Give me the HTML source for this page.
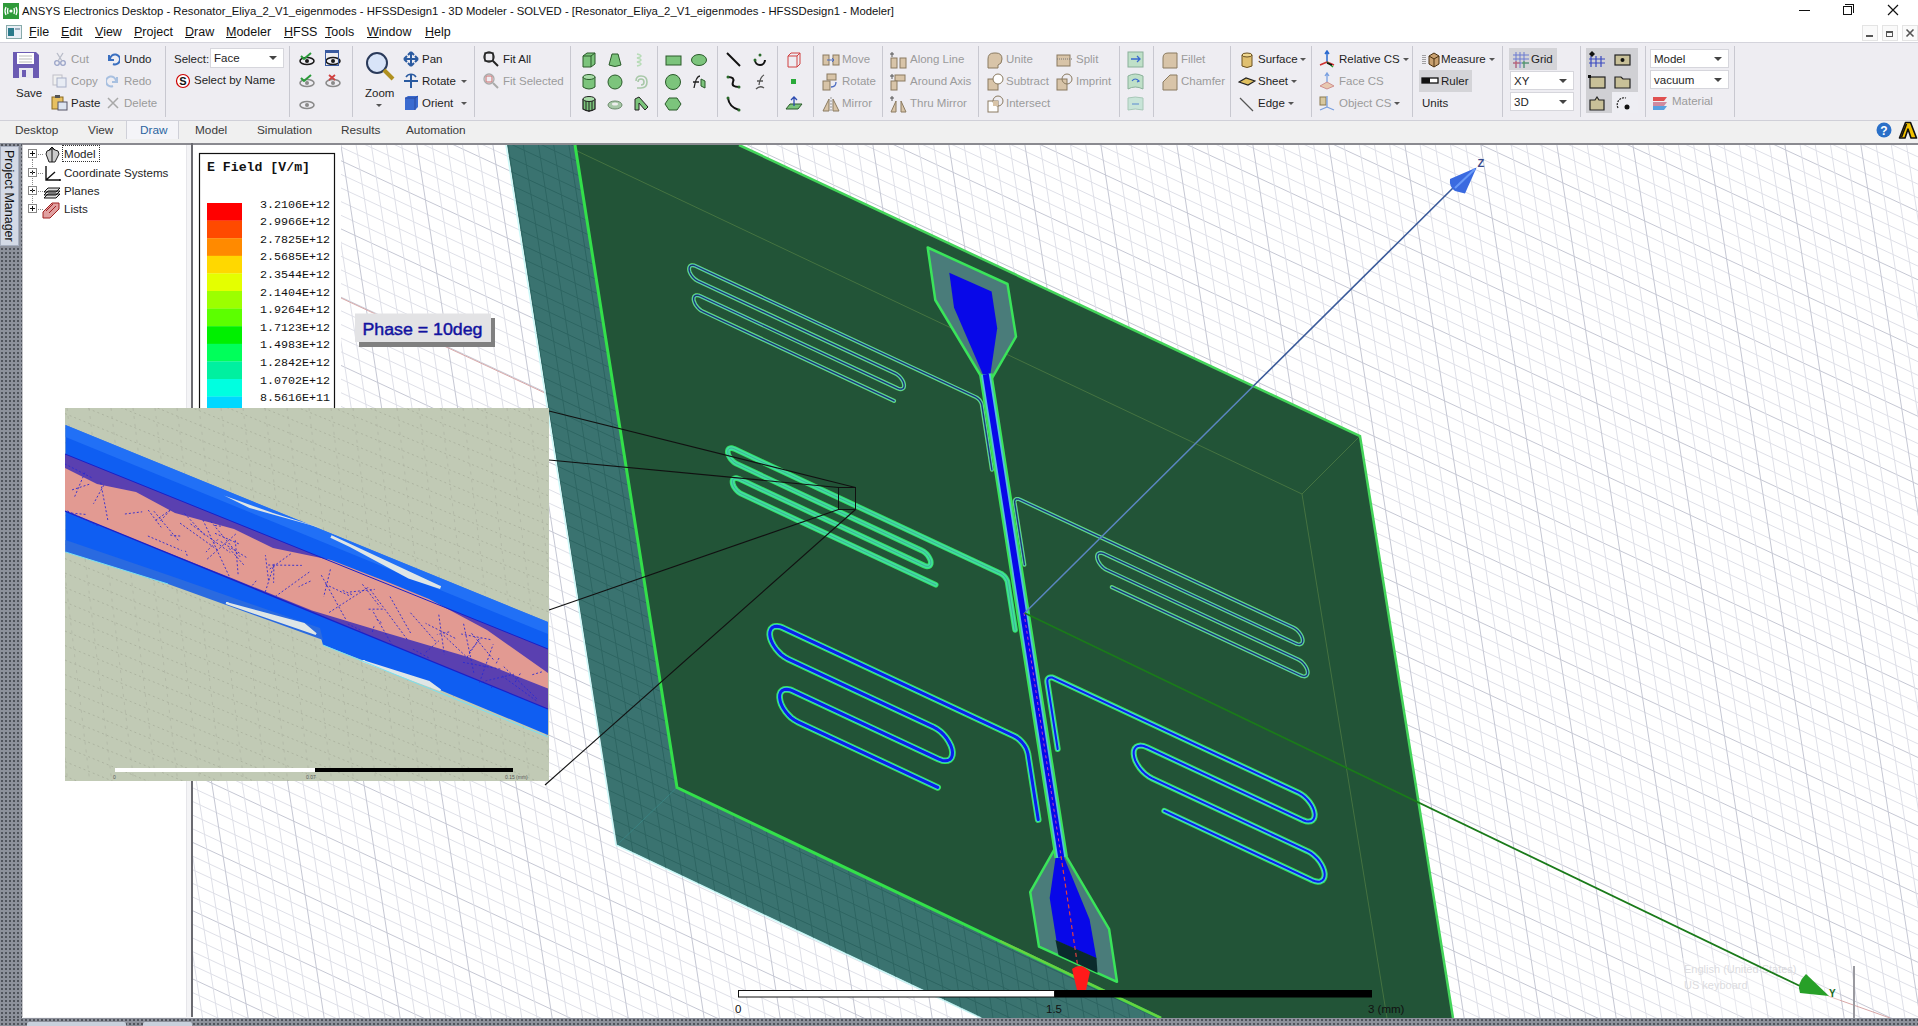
<!DOCTYPE html><html><head><meta charset="utf-8"><style>
*{box-sizing:border-box}
body{margin:0;width:1918px;height:1026px;position:relative;overflow:hidden;background:#fff;font-family:"Liberation Sans",sans-serif;color:#1e1e1e}
.a{position:absolute;white-space:nowrap}
.t{position:absolute;white-space:nowrap;font-size:12px;line-height:14px}
.g{color:#9b9b9b}
.sep{position:absolute;width:1px;background:#c8c8d0}
.dd{position:absolute;background:#fff;border:1px solid #d6d6dc;font-size:11.5px;line-height:18px;padding-left:3px}
.dd:after{content:"";position:absolute;right:6px;top:7px;border-left:4px solid transparent;border-right:4px solid transparent;border-top:4px solid #444}
.arr{position:absolute;width:0;height:0;border-left:3px solid transparent;border-right:3px solid transparent;border-top:3px solid #555}
</style></head><body>
<div class="a" style="left:0;top:0;width:1918px;height:22px;background:#fff"></div>
<svg class="a" style="left:3px;top:3px" width="16" height="16"><rect x="0" y="0" width="16" height="16" fill="#2f9a3a"/><path d="M3 4 Q1 8 3 12 M5 5 Q4 8 5 11 M13 4 Q15 8 13 12 M11 5 Q12 8 11 11" stroke="#fff" stroke-width="1.3" fill="none"/><circle cx="8" cy="8" r="1.6" fill="#fff"/></svg>
<div class="a" style="left:22px;top:4px;font-size:11.3px;line-height:15px;color:#111">ANSYS Electronics Desktop - Resonator_Eliya_2_V1_eigenmodes - HFSSDesign1 - 3D Modeler - SOLVED - [Resonator_Eliya_2_V1_eigenmodes - HFSSDesign1 - Modeler]</div>
<div class="a" style="left:1799px;top:10px;width:11px;height:1px;background:#111"></div>
<div class="a" style="left:1843px;top:6px;width:9px;height:9px;border:1px solid #111;background:#fff"></div><div class="a" style="left:1845px;top:4px;width:9px;height:9px;border-top:1px solid #111;border-right:1px solid #111"></div>
<svg class="a" style="left:1887px;top:4px" width="12" height="12"><path d="M1 1 L11 11 M11 1 L1 11" stroke="#111" stroke-width="1.2"/></svg>
<svg class="a" style="left:6px;top:25px" width="16" height="14"><rect x="0.5" y="0.5" width="15" height="13" fill="#e8eef5" stroke="#8aa"/><rect x="2" y="3" width="6" height="8" fill="#2a7a8a"/><rect x="9" y="3" width="5" height="2" fill="#9ab"/></svg>
<div class="a" style="left:29px;top:25px;font-size:12.5px;line-height:15px;color:#111"><u>F</u>ile</div>
<div class="a" style="left:61px;top:25px;font-size:12.5px;line-height:15px;color:#111"><u>E</u>dit</div>
<div class="a" style="left:95px;top:25px;font-size:12.5px;line-height:15px;color:#111"><u>V</u>iew</div>
<div class="a" style="left:134px;top:25px;font-size:12.5px;line-height:15px;color:#111"><u>P</u>roject</div>
<div class="a" style="left:185px;top:25px;font-size:12.5px;line-height:15px;color:#111"><u>D</u>raw</div>
<div class="a" style="left:226px;top:25px;font-size:12.5px;line-height:15px;color:#111"><u>M</u>odeler</div>
<div class="a" style="left:284px;top:25px;font-size:12.5px;line-height:15px;color:#111"><u>H</u>FSS</div>
<div class="a" style="left:325px;top:25px;font-size:12.5px;line-height:15px;color:#111"><u>T</u>ools</div>
<div class="a" style="left:367px;top:25px;font-size:12.5px;line-height:15px;color:#111"><u>W</u>indow</div>
<div class="a" style="left:425px;top:25px;font-size:12.5px;line-height:15px;color:#111"><u>H</u>elp</div>
<div class="a" style="left:1862px;top:25px;width:16px;height:16px;background:#fafafa;border:1px solid #e4e4e4"></div>
<div class="a" style="left:1882px;top:25px;width:16px;height:16px;background:#fafafa;border:1px solid #e4e4e4"></div>
<div class="a" style="left:1902px;top:25px;width:16px;height:16px;background:#fafafa;border:1px solid #e4e4e4"></div>
<div class="a" style="left:1866px;top:35px;width:7px;height:2px;background:#555"></div>
<div class="a" style="left:1886px;top:31px;width:7px;height:6px;border:1px solid #555;border-top-width:2px"></div>
<svg class="a" style="left:1905px;top:28px" width="10" height="10"><path d="M1.5 1.5 L8.5 8.5 M8.5 1.5 L1.5 8.5" stroke="#555" stroke-width="1.6"/></svg>
<div class="a" style="left:0;top:42px;width:1918px;height:79px;background:#eeedf2;border-top:1px solid #d4d4dc;border-bottom:1px solid #d0d0d8"></div>
<div class="sep" style="left:165px;top:46px;height:71px"></div>
<div class="sep" style="left:289px;top:46px;height:71px"></div>
<div class="sep" style="left:352px;top:46px;height:71px"></div>
<div class="sep" style="left:474px;top:46px;height:71px"></div>
<div class="sep" style="left:570px;top:46px;height:71px"></div>
<div class="sep" style="left:657px;top:46px;height:71px"></div>
<div class="sep" style="left:717px;top:46px;height:71px"></div>
<div class="sep" style="left:777px;top:46px;height:71px"></div>
<div class="sep" style="left:813px;top:46px;height:71px"></div>
<div class="sep" style="left:882px;top:46px;height:71px"></div>
<div class="sep" style="left:978px;top:46px;height:71px"></div>
<div class="sep" style="left:1119px;top:46px;height:71px"></div>
<div class="sep" style="left:1153px;top:46px;height:71px"></div>
<div class="sep" style="left:1230px;top:46px;height:71px"></div>
<div class="sep" style="left:1311px;top:46px;height:71px"></div>
<div class="sep" style="left:1412px;top:46px;height:71px"></div>
<div class="sep" style="left:1502px;top:46px;height:71px"></div>
<div class="sep" style="left:1580px;top:46px;height:71px"></div>
<div class="sep" style="left:1645px;top:46px;height:71px"></div>
<div class="sep" style="left:1734px;top:46px;height:71px"></div>
<svg class="a" style="left:12px;top:51px" width="28" height="28"><path d="M1 1 H24 L27 4 V27 H1 Z" fill="#6b5bb3"/><rect x="5" y="2" width="17" height="11" fill="#fff"/><path d="M7 5 H20 M7 8 H20 M7 11 H20" stroke="#bbb"/><rect x="7" y="17" width="14" height="10" fill="#e8e8f0"/><rect x="10" y="19" width="4" height="7" fill="#6b5bb3"/></svg>
<div class="t" style="left:16px;top:86px;font-size:11.5px">Save</div>
<svg class="a" style="left:53px;top:52px" width="14" height="14"><circle cx="4" cy="11" r="2.3" fill="none" stroke="#9aa4c8" stroke-width="1.3"/><circle cx="10" cy="11" r="2.3" fill="none" stroke="#9aa4c8" stroke-width="1.3"/><path d="M5 9 L10 1 M9 9 L4 1" stroke="#b8bcc8" stroke-width="1.3"/></svg>
<div class="t g" style="left:71px;top:52px;font-size:11.5px">Cut</div>
<svg class="a" style="left:52px;top:74px" width="16" height="14"><rect x="1" y="1" width="9" height="10" fill="#f0f0f0" stroke="#c0c0c8"/><rect x="5" y="4" width="9" height="9" fill="#e8ecf4" stroke="#a8b0c8"/></svg>
<div class="t g" style="left:71px;top:74px;font-size:11.5px">Copy</div>
<svg class="a" style="left:51px;top:95px" width="17" height="16"><rect x="1" y="2" width="11" height="12" fill="#e8c060" stroke="#8a6a20"/><rect x="4" y="0" width="5" height="3" fill="#555"/><rect x="7" y="7" width="9" height="8" fill="#dde4f0" stroke="#556"/></svg>
<div class="t" style="left:71px;top:96px;font-size:11.5px">Paste</div>
<svg class="a" style="left:106px;top:52px" width="14" height="14"><path d="M3 3 V8 H8" fill="none" stroke="#3a6fc0" stroke-width="2"/><path d="M4 7 A5 5 0 1 1 7 12" fill="none" stroke="#3a6fc0" stroke-width="2"/></svg>
<div class="t" style="left:124px;top:52px;font-size:11.5px">Undo</div>
<svg class="a" style="left:106px;top:74px" width="14" height="14"><path d="M11 3 V8 H6" fill="none" stroke="#a8c0e0" stroke-width="2"/><path d="M10 7 A5 5 0 1 0 7 12" fill="none" stroke="#a8c0e0" stroke-width="2"/></svg>
<div class="t g" style="left:124px;top:74px;font-size:11.5px">Redo</div>
<svg class="a" style="left:106px;top:96px" width="14" height="14"><path d="M2 2 L12 12 M12 2 L2 12" stroke="#a8a8a8" stroke-width="1.5"/></svg>
<div class="t g" style="left:124px;top:96px;font-size:11.5px">Delete</div>
<div class="t" style="left:174px;top:52px;font-size:11.5px">Select:</div>
<div class="dd" style="left:210px;top:48px;width:74px;height:20px">Face</div>
<svg class="a" style="left:175px;top:73px" width="16" height="16"><circle cx="8" cy="8" r="6.5" fill="#fff" stroke="#c00" stroke-width="1.2"/><text x="8" y="12" font-size="11" text-anchor="middle" font-family="Liberation Sans" font-weight="bold" fill="#111">S</text></svg>
<div class="t" style="left:194px;top:73px;font-size:11.5px">Select by Name</div>
<svg class="a" style="left:298px;top:52px" width="18" height="14"><ellipse cx="9" cy="9" rx="7" ry="3.5" fill="none" stroke="#1a1a1a" stroke-width="1.6"/><circle cx="9" cy="9" r="2" fill="#1a1a1a"/><path d="M3 4 L6 7 L13 1" stroke="#2a9a3a" stroke-width="2" fill="none"/></svg>
<svg class="a" style="left:324px;top:52px" width="18" height="14"><ellipse cx="9" cy="9" rx="7" ry="3.5" fill="none" stroke="#1a1a1a" stroke-width="1.6"/><circle cx="9" cy="9" r="2" fill="#1a1a1a"/></svg>
<div class="a" style="left:325px;top:50px;width:14px;height:16px;border:1px solid #3a5aa0;border-top-width:3px"></div>
<svg class="a" style="left:298px;top:74px" width="18" height="14"><ellipse cx="9" cy="9" rx="7" ry="3.5" fill="none" stroke="#8a8a8a" stroke-width="1.6"/><circle cx="9" cy="9" r="2" fill="#8a8a8a"/><path d="M3 4 L6 7 L13 1" stroke="#2a9a3a" stroke-width="2" fill="none"/></svg>
<svg class="a" style="left:324px;top:74px" width="18" height="14"><ellipse cx="9" cy="9" rx="7" ry="3.5" fill="none" stroke="#8a8a8a" stroke-width="1.6"/><circle cx="9" cy="9" r="2" fill="#8a8a8a"/><path d="M5 1 L11 6 M11 1 L5 6" stroke="#d04040" stroke-width="1.8"/></svg>
<svg class="a" style="left:298px;top:96px" width="18" height="14"><ellipse cx="9" cy="9" rx="7" ry="3.5" fill="none" stroke="#8a8a8a" stroke-width="1.6"/><circle cx="9" cy="9" r="2" fill="#8a8a8a"/></svg>
<svg class="a" style="left:364px;top:51px" width="32" height="30"><circle cx="13" cy="12" r="10" fill="#d8e4f8" stroke="#2a3a5a" stroke-width="2"/><path d="M20 19 L29 28" stroke="#b09020" stroke-width="4"/></svg>
<div class="t" style="left:365px;top:86px;font-size:11.5px">Zoom</div>
<div class="arr" style="left:376px;top:104px"></div>
<svg class="a" style="left:403px;top:51px" width="16" height="16"><path d="M8 1 V15 M1 8 H15 M8 1 L5 4 M8 1 L11 4 M8 15 L5 12 M8 15 L11 12 M1 8 L4 5 M1 8 L4 11 M15 8 L12 5 M15 8 L12 11" stroke="#2a5aa0" stroke-width="2" fill="none"/></svg>
<div class="t" style="left:422px;top:52px;font-size:11.5px">Pan</div>
<svg class="a" style="left:403px;top:73px" width="16" height="16"><path d="M8 1 V15 M1 8 H15" stroke="#2a5aa0" stroke-width="2"/><path d="M3 4 A6 6 0 0 1 13 4" stroke="#2a5aa0" stroke-width="1.5" fill="none"/></svg>
<div class="t" style="left:422px;top:74px;font-size:11.5px">Rotate</div>
<div class="arr" style="left:461px;top:80px"></div>
<svg class="a" style="left:404px;top:95px" width="15" height="16"><path d="M1 3 L4 1 H14 V12 L11 15 H1 Z" fill="#3a6ad0"/><path d="M1 3 H11 V15 M11 3 L14 1" stroke="#2a4aa0" fill="none"/></svg>
<div class="t" style="left:422px;top:96px;font-size:11.5px">Orient</div>
<div class="arr" style="left:461px;top:102px"></div>
<svg class="a" style="left:483px;top:51px" width="16" height="16"><rect x="2" y="2" width="8" height="8" fill="none" stroke="#222" stroke-width="1.3"/><circle cx="6" cy="6" r="5" fill="none" stroke="#222" stroke-width="1.3"/><path d="M10 10 L15 15" stroke="#222" stroke-width="2"/></svg>
<div class="t" style="left:503px;top:52px;font-size:11.5px">Fit All</div>
<svg class="a" style="left:483px;top:73px" width="16" height="16"><rect x="3" y="3" width="6" height="6" fill="none" stroke="#d08080" stroke-width="1.2"/><circle cx="6" cy="6" r="5" fill="none" stroke="#aaa" stroke-width="1.3"/><path d="M10 10 L15 15" stroke="#aaa" stroke-width="2"/></svg>
<div class="t g" style="left:503px;top:74px;font-size:11.5px">Fit Selected</div>
<svg class="a" style="left:580px;top:51px" width="18" height="18"><path d="M3 5 L7 2 H15 V13 L11 16 H3 Z" fill="#7cc47c" stroke="#2a5a2a"/><path d="M3 5 H11 V16 M11 5 L15 2" stroke="#2a5a2a" fill="none"/></svg>
<svg class="a" style="left:606px;top:51px" width="18" height="18"><path d="M6 3 H12 L15 14 Q9 17 3 14 Z" fill="#7cc47c" stroke="#2a5a2a"/></svg>
<svg class="a" style="left:632px;top:51px" width="18" height="18"><path d="M5 3 Q13 5 5 7 Q13 9 5 11 Q13 13 5 15" stroke="#b8dcb8" stroke-width="1.5" fill="none"/></svg>
<svg class="a" style="left:580px;top:73px" width="18" height="18"><path d="M3 4 V14 Q9 18 15 14 V4" fill="#7cc47c" stroke="#2a5a2a"/><ellipse cx="9" cy="4" rx="6" ry="2.5" fill="#a8dca8" stroke="#2a5a2a"/></svg>
<svg class="a" style="left:606px;top:73px" width="18" height="18"><circle cx="9" cy="9" r="7" fill="#7cc47c" stroke="#2a5a2a"/></svg>
<svg class="a" style="left:632px;top:73px" width="18" height="18"><path d="M4 8 Q4 3 9 3 Q15 3 15 9 Q15 15 9 15 L5 15 M6 9 Q6 6 9 6 Q12 6 12 9 Q12 12 9 12" stroke="#a8c8a8" stroke-width="1.6" fill="none"/></svg>
<svg class="a" style="left:580px;top:95px" width="18" height="18"><path d="M3 4 V14 Q9 18 15 14 V4" fill="#7cc47c" stroke="#222" stroke-width="1.3"/><ellipse cx="9" cy="4" rx="6" ry="2.5" fill="#a8dca8" stroke="#222"/><path d="M6 6 V16 M9 7 V17 M12 6 V16" stroke="#222"/></svg>
<svg class="a" style="left:606px;top:95px" width="18" height="18"><ellipse cx="9" cy="10" rx="7" ry="4" fill="#a8c8a8" stroke="#6a8a6a"/><ellipse cx="9" cy="9" rx="3" ry="1.5" fill="#eee"/></svg>
<svg class="a" style="left:632px;top:95px" width="18" height="18"><path d="M3 15 V4 L7 2 L16 12 L13 15 L7 8 V15 Z" fill="#7cc47c" stroke="#222"/></svg>
<svg class="a" style="left:664px;top:51px" width="18" height="18"><rect x="2" y="5" width="15" height="9" fill="#7cc47c" stroke="#2a5a2a"/></svg>
<svg class="a" style="left:690px;top:51px" width="18" height="18"><ellipse cx="9" cy="9" rx="7.5" ry="5.5" fill="#7cc47c" stroke="#2a5a2a"/></svg>
<svg class="a" style="left:664px;top:73px" width="18" height="18"><circle cx="9" cy="9" r="7.5" fill="#7cc47c" stroke="#2a5a2a"/></svg>
<svg class="a" style="left:690px;top:73px" width="18" height="18"><path d="M4 15 Q6 3 10 3 M3 9 H9" stroke="#222" stroke-width="1.3" fill="none"/><path d="M11 6 L15 8 V15 L11 13 Z" fill="#7cc47c" stroke="#2a5a2a"/></svg>
<svg class="a" style="left:664px;top:95px" width="18" height="18"><path d="M5 3 H13 L17 9 L13 15 H5 L1 9 Z" fill="#7cc47c" stroke="#2a5a2a"/></svg>
<svg class="a" style="left:725px;top:51px" width="18" height="18"><path d="M2 2 L15 15" stroke="#111" stroke-width="2"/></svg>
<svg class="a" style="left:751px;top:51px" width="18" height="18"><path d="M4 9 A5 5 0 1 0 14 9" stroke="#111" stroke-width="2" fill="none"/><circle cx="4" cy="9" r="1.5" fill="#2a6a2a"/><circle cx="9" cy="4" r="1.5" fill="#2a6a2a"/></svg>
<svg class="a" style="left:725px;top:73px" width="18" height="18"><path d="M3 4 Q10 4 8 9 Q6 14 14 14" stroke="#111" stroke-width="2" fill="none"/><circle cx="3" cy="4" r="1.5" fill="#2a6a2a"/><circle cx="14" cy="14" r="1.5" fill="#2a6a2a"/></svg>
<svg class="a" style="left:751px;top:73px" width="18" height="18"><path d="M5 16 Q9 12 13 15 M8 12 Q9 4 13 2 M6 8 H12" stroke="#555" stroke-width="1.3" fill="none"/></svg>
<svg class="a" style="left:725px;top:95px" width="18" height="18"><path d="M3 3 Q4 12 14 15" stroke="#111" stroke-width="2" fill="none"/><circle cx="3" cy="3" r="1.5" fill="#2a6a2a"/><circle cx="14" cy="15" r="1.5" fill="#2a6a2a"/></svg>
<svg class="a" style="left:785px;top:51px" width="18" height="18"><path d="M3 5 L6 2 H15 V13 L12 16 H3 Z M3 5 H12 V16 M12 5 L15 2" stroke="#d04040" fill="none"/></svg>
<svg class="a" style="left:785px;top:73px" width="18" height="18"><rect x="6" y="6" width="5" height="5" fill="#2aaa3a"/></svg>
<svg class="a" style="left:785px;top:95px" width="18" height="18"><path d="M1 14 L5 9 H17 L13 14 Z" fill="#7cc47c" stroke="#2a5a2a"/><path d="M9 11 V2 M6 5 L9 2 L12 5" stroke="#2a4ab0" stroke-width="1.3" fill="none"/></svg>
<svg class="a" style="left:822px;top:51px" width="18" height="18"><rect x="1" y="4" width="6" height="10" fill="#d8c4a8" stroke="#8a7a60"/><rect x="11" y="4" width="6" height="10" fill="#d8c4a8" stroke="#8a7a60"/><path d="M5 9 H12 M10 7 L12 9 L10 11" stroke="#4a6ac0" fill="none"/></svg>
<div class="t g" style="left:842px;top:52px;font-size:11.5px">Move</div>
<svg class="a" style="left:822px;top:73px" width="18" height="18"><rect x="5" y="1" width="9" height="6" fill="#d8c4a8" stroke="#8a7a60"/><rect x="1" y="8" width="7" height="9" fill="#d8c4a8" stroke="#8a7a60"/><path d="M9 14 Q14 14 14 9" stroke="#4a6ac0" stroke-width="1.3" fill="none"/></svg>
<div class="t g" style="left:842px;top:74px;font-size:11.5px">Rotate</div>
<svg class="a" style="left:822px;top:95px" width="18" height="18"><path d="M1 16 L7 4 V16 Z M17 16 L11 4 V16 Z" fill="#d8c4a8" stroke="#8a7a60"/><path d="M9 2 V17" stroke="#999" stroke-dasharray="2 1"/></svg>
<div class="t g" style="left:842px;top:96px;font-size:11.5px">Mirror</div>
<svg class="a" style="left:889px;top:51px" width="18" height="18"><path d="M3 1 V6 M1 3 H5" stroke="#555"/><rect x="2" y="7" width="6" height="10" fill="#d8c4a8" stroke="#8a7a60"/><rect x="11" y="7" width="6" height="10" fill="#d8c4a8" stroke="#8a7a60"/></svg>
<div class="t g" style="left:910px;top:52px;font-size:11.5px">Along Line</div>
<svg class="a" style="left:889px;top:73px" width="18" height="18"><path d="M3 1 V6 M1 3 H5" stroke="#555"/><rect x="6" y="2" width="10" height="6" fill="#d8c4a8" stroke="#8a7a60"/><rect x="2" y="8" width="6" height="9" fill="#d8c4a8" stroke="#8a7a60"/></svg>
<div class="t g" style="left:910px;top:74px;font-size:11.5px">Around Axis</div>
<svg class="a" style="left:889px;top:95px" width="18" height="18"><path d="M3 1 V6 M1 3 H5" stroke="#555"/><path d="M2 17 L7 6 V17 Z M17 17 L12 6 V17 Z" fill="#d8c4a8" stroke="#8a7a60"/></svg>
<div class="t g" style="left:910px;top:96px;font-size:11.5px">Thru Mirror</div>
<svg class="a" style="left:986px;top:51px" width="18" height="18"><path d="M2 8 Q2 2 8 2 H10 Q16 2 16 8 Q16 13 12 14 V17 H2 Z" fill="#d8c4a8" stroke="#8a7a60"/></svg>
<div class="t g" style="left:1006px;top:52px;font-size:11.5px">Unite</div>
<svg class="a" style="left:986px;top:73px" width="18" height="18"><rect x="2" y="6" width="10" height="11" fill="#d8c4a8" stroke="#8a7a60"/><circle cx="12" cy="6" r="5" fill="#fff" stroke="#8a7a60"/></svg>
<div class="t g" style="left:1006px;top:74px;font-size:11.5px">Subtract</div>
<svg class="a" style="left:986px;top:95px" width="18" height="18"><rect x="2" y="6" width="10" height="11" fill="#fff" stroke="#8a7a60"/><circle cx="12" cy="6" r="5" fill="none" stroke="#8a7a60"/><rect x="7" y="6" width="5" height="5" fill="#d8c4a8"/></svg>
<div class="t g" style="left:1006px;top:96px;font-size:11.5px">Intersect</div>
<svg class="a" style="left:1056px;top:51px" width="18" height="18"><rect x="1" y="4" width="13" height="11" fill="#d8c4a8" stroke="#8a7a60"/><path d="M1 8 H17" stroke="#777" stroke-dasharray="1 1"/></svg>
<div class="t g" style="left:1076px;top:52px;font-size:11.5px">Split</div>
<svg class="a" style="left:1056px;top:73px" width="18" height="18"><rect x="1" y="6" width="10" height="11" fill="#d8c4a8" stroke="#8a7a60"/><circle cx="11" cy="6" r="5" fill="none" stroke="#8a7a60"/></svg>
<div class="t g" style="left:1076px;top:74px;font-size:11.5px">Imprint</div>
<svg class="a" style="left:1127px;top:51px" width="18" height="18"><rect x="1" y="1" width="15" height="15" fill="#bfe0c8" stroke="#8ab09a"/><path d="M4 8 H13 M10 5 L13 8 L10 11" stroke="#3a6ad0" stroke-width="1.3" fill="none"/></svg>
<svg class="a" style="left:1127px;top:73px" width="18" height="18"><path d="M1 3 Q8 -1 16 3 V16 Q8 12 1 16 Z" fill="#bfe0c8" stroke="#8ab09a"/><path d="M5 8 Q8 4 12 8 L10 9" stroke="#3a6ad0" stroke-width="1.2" fill="none"/></svg>
<svg class="a" style="left:1127px;top:95px" width="18" height="18"><path d="M1 3 Q8 1 16 3 V15 Q8 13 1 15 Z" fill="#c8e4d8" stroke="#a8c8b8"/><path d="M5 9 H12" stroke="#5a8ad0" fill="none"/></svg>
<svg class="a" style="left:1161px;top:51px" width="18" height="18"><path d="M2 17 V7 Q2 2 7 2 H16 V17 Z" fill="#d8c4a8" stroke="#8a7a60"/></svg>
<div class="t g" style="left:1181px;top:52px;font-size:11.5px">Fillet</div>
<svg class="a" style="left:1161px;top:73px" width="18" height="18"><path d="M2 17 V9 L9 2 H16 V17 Z" fill="#d8c4a8" stroke="#8a7a60"/></svg>
<div class="t g" style="left:1181px;top:74px;font-size:11.5px">Chamfer</div>
<svg class="a" style="left:1238px;top:51px" width="18" height="18"><path d="M4 4 V15 Q9 18 14 15 V4" fill="#e0c070" stroke="#6a5020"/><ellipse cx="9" cy="4" rx="5" ry="2" fill="#f0d890" stroke="#6a5020"/></svg>
<div class="t" style="left:1258px;top:52px;font-size:11.5px">Surface</div>
<div class="arr" style="left:1300px;top:58px"></div>
<svg class="a" style="left:1238px;top:73px" width="18" height="18"><path d="M1 9 L8 5 L17 8 L10 12 Z" fill="#e0c060" stroke="#222" stroke-width="1.2"/></svg>
<div class="t" style="left:1258px;top:74px;font-size:11.5px">Sheet</div>
<div class="arr" style="left:1291px;top:80px"></div>
<svg class="a" style="left:1238px;top:95px" width="18" height="18"><path d="M2 3 L15 16" stroke="#555" stroke-width="1.2"/></svg>
<div class="t" style="left:1258px;top:96px;font-size:11.5px">Edge</div>
<div class="arr" style="left:1288px;top:102px"></div>
<svg class="a" style="left:1318px;top:50px" width="18" height="18"><path d="M9 12 V2 M7 4 L9 1 L11 4" stroke="#2a6ad0" stroke-width="1.5" fill="none"/><path d="M9 12 L2 15 M9 12 L16 15" stroke="#d03030" stroke-width="1.5"/><path d="M9 12 L15 17" stroke="#2a9a2a" stroke-width="1.5"/><path d="M9 13 L14 15" stroke="#111" stroke-width="1.5"/></svg>
<div class="t" style="left:1339px;top:52px;font-size:11.5px">Relative CS</div>
<div class="arr" style="left:1403px;top:58px"></div>
<svg class="a" style="left:1318px;top:72px" width="18" height="18"><path d="M9 12 V2 M7 4 L9 1 L11 4" stroke="#7aa0e0" stroke-width="1.3" fill="none"/><path d="M2 14 L9 10 L16 14 L9 17 Z" fill="#e8c8b0" stroke="#d09090"/></svg>
<div class="t g" style="left:1339px;top:74px;font-size:11.5px">Face CS</div>
<svg class="a" style="left:1318px;top:94px" width="18" height="18"><rect x="2" y="3" width="6" height="8" fill="#d8c8a0" stroke="#8a7a50"/><path d="M9 13 V2 M9 13 L2 16 M9 13 L16 16" stroke="#7aa0e0" stroke-width="1.3" fill="none"/></svg>
<div class="t g" style="left:1339px;top:96px;font-size:11.5px">Object CS</div>
<div class="arr" style="left:1394px;top:102px"></div>
<svg class="a" style="left:1422px;top:51px" width="18" height="18"><path d="M7 5 L12 2 L17 5 V13 L12 16 L7 13 Z" fill="#c8a070" stroke="#4a3010"/><path d="M7 5 L12 8 L17 5 M12 8 V16" stroke="#4a3010" fill="none"/><path d="M1 4 V14 M3 4 V14" stroke="#555" stroke-dasharray="1 1"/></svg>
<div class="t" style="left:1441px;top:52px;font-size:11.5px">Measure</div>
<div class="arr" style="left:1489px;top:58px"></div>
<div class="a" style="left:1419px;top:70px;width:53px;height:22px;background:#d4d4d8"></div>
<svg class="a" style="left:1421px;top:76px" width="18" height="10"><rect x="1" y="2" width="16" height="5" fill="#fff" stroke="#111" stroke-width="1.3"/><rect x="1" y="2" width="8" height="5" fill="#111"/></svg>
<div class="t" style="left:1441px;top:74px;font-size:11.5px">Ruler</div>
<div class="t" style="left:1422px;top:96px;font-size:11.5px">Units</div>
<div class="a" style="left:1509px;top:48px;width:48px;height:22px;background:#d4d4d8"></div>
<svg class="a" style="left:1512px;top:51px" width="18" height="18"><path d="M4 1 V17 M8 1 V17 M12 1 V17 M1 4 H17 M1 8 H17 M1 12 H17" stroke="#6a7ad0" stroke-width="1"/><path d="M4 10 V17 M1 12 H8" stroke="#d06060"/><path d="M12 10 V17 M10 12 H17" stroke="#50a050"/></svg>
<div class="t" style="left:1531px;top:52px;font-size:11.5px">Grid</div>
<div class="dd" style="left:1510px;top:71px;width:64px;height:19px">XY</div>
<div class="dd" style="left:1510px;top:92px;width:64px;height:19px">3D</div>
<div class="a" style="left:1586px;top:48px;width:52px;height:65px;background:#d0d0d4"></div>
<div class="a" style="left:1612px;top:92px;width:26px;height:21px;background:#eeeef3"></div>
<svg class="a" style="left:1588px;top:50px" width="18" height="18"><path d="M3 6 V17 M8 6 V17 M13 6 V17 M1 9 H17 M1 13 H17" stroke="#3a4ac0" stroke-width="1.2"/><path d="M4 1 L7 4 L4 7 L1 4 Z" fill="#111"/></svg>
<svg class="a" style="left:1614px;top:51px" width="18" height="18"><rect x="1" y="4" width="15" height="10" fill="#c8c098" stroke="#222" stroke-width="1.2"/><circle cx="8.5" cy="9" r="2" fill="#111"/></svg>
<svg class="a" style="left:1588px;top:72px" width="18" height="18"><rect x="2" y="5" width="15" height="11" fill="#c8c098" stroke="#222" stroke-width="1.2"/><rect x="0" y="3" width="3" height="3" fill="#111"/></svg>
<svg class="a" style="left:1614px;top:72px" width="18" height="18"><path d="M1 5 H7 L9 7 H16 V16 H1 Z" fill="#c8c098" stroke="#222" stroke-width="1.2"/></svg>
<svg class="a" style="left:1588px;top:94px" width="18" height="18"><path d="M2 6 H7 L9 3 L11 6 H16 V16 H2 Z" fill="#c8c098" stroke="#222" stroke-width="1.2"/></svg>
<svg class="a" style="left:1614px;top:94px" width="18" height="18"><path d="M4 14 A7 7 0 0 1 12 4" stroke="#222" stroke-width="1.2" stroke-dasharray="2 1" fill="none"/><circle cx="13" cy="13" r="2.5" fill="#111"/></svg>
<div class="dd" style="left:1650px;top:49px;width:79px;height:19px">Model</div>
<div class="dd" style="left:1650px;top:70px;width:79px;height:19px">vacuum</div>
<svg class="a" style="left:1651px;top:94px" width="18" height="18"><path d="M2 3 H16 L13 7 H2 Z" fill="#e05050"/><path d="M2 8 H16 L13 12 H2 Z" fill="#d08aa0"/><path d="M2 12 H16 L13 16 H2 Z" fill="#5aa0e0"/></svg>
<div class="t g" style="left:1672px;top:94px;font-size:11.5px">Material</div>
<div class="a" style="left:0;top:121px;width:1918px;height:22px;background:#f0f0f0"></div>
<div class="a" style="left:126px;top:120px;width:53px;height:19px;background:#f4f4f8;border:1px solid #cfd0d8;border-bottom:none"></div>
<div class="t" style="left:15px;top:123px;color:#3a3a3a;font-size:11.8px">Desktop</div>
<div class="t" style="left:88px;top:123px;color:#3a3a3a;font-size:11.8px">View</div>
<div class="t" style="left:140px;top:123px;color:#2a64a0;font-size:11.8px">Draw</div>
<div class="t" style="left:195px;top:123px;color:#3a3a3a;font-size:11.8px">Model</div>
<div class="t" style="left:257px;top:123px;color:#3a3a3a;font-size:11.8px">Simulation</div>
<div class="t" style="left:341px;top:123px;color:#3a3a3a;font-size:11.8px">Results</div>
<div class="t" style="left:406px;top:123px;color:#3a3a3a;font-size:11.8px">Automation</div>
<svg class="a" style="left:1876px;top:122px" width="16" height="16"><circle cx="8" cy="8" r="7.5" fill="#2a70c8"/><text x="8" y="12.5" font-size="12" font-weight="bold" text-anchor="middle" fill="#fff" font-family="Liberation Sans">?</text></svg>
<svg class="a" style="left:1898px;top:121px" width="20" height="18"><path d="M1.5 17 L7.5 1.5 H12.5 L18.5 17 H13 L10 8 L7 17 Z" fill="#f2c200" stroke="#111" stroke-width="1.6" stroke-linejoin="round"/><path d="M3.5 16 L8.5 3" stroke="#111" stroke-width="1.6"/></svg>
<div class="a" style="left:0;top:143px;width:22px;height:883px;background:#8d919b;background-image:radial-gradient(#50545c 1px,transparent 1.3px);background-size:4px 4px"></div>
<div class="a" style="left:0;top:146px;width:19px;height:100px;background:#d4dae6;border:1px solid #a8b0c0"></div>
<div class="a" style="left:2px;top:150px;width:15px;height:92px;overflow:visible"><div style="position:absolute;left:14px;top:0;transform-origin:0 0;transform:rotate(90deg);font-size:12.5px;line-height:15px;white-space:nowrap;color:#111">Project Manager</div></div>
<div class="a" style="left:22px;top:143px;width:170px;height:876px;background:#fff;border-top:2px solid #8a8e98;border-left:1px solid #c8c8cc"></div>
<div class="a" style="left:22px;top:143px;width:1896px;height:2px;background:#8a8a90"></div>
<div class="a" style="left:186px;top:145px;width:5px;height:874px;background:#f4f4f6;border-left:1px solid #e6e6ea"></div>
<div class="a" style="left:191px;top:143px;width:2px;height:876px;background:#6a6a70"></div>
<div class="a" style="left:28px;top:149px;width:9px;height:9px;border:1px solid #888;background:#fff"></div>
<div class="a" style="left:30px;top:153px;width:5px;height:1px;background:#111"></div><div class="a" style="left:32px;top:151px;width:1px;height:5px;background:#111"></div>
<div class="a" style="left:38px;top:154px;width:5px;border-top:1px dotted #888"></div>
<div class="t" style="left:64px;top:146.5px;font-size:11.6px">Model</div>
<div class="a" style="left:28px;top:168px;width:9px;height:9px;border:1px solid #888;background:#fff"></div>
<div class="a" style="left:30px;top:172px;width:5px;height:1px;background:#111"></div><div class="a" style="left:32px;top:170px;width:1px;height:5px;background:#111"></div>
<div class="a" style="left:38px;top:173px;width:5px;border-top:1px dotted #888"></div>
<div class="t" style="left:64px;top:165.5px;font-size:11.6px">Coordinate Systems</div>
<div class="a" style="left:28px;top:186px;width:9px;height:9px;border:1px solid #888;background:#fff"></div>
<div class="a" style="left:30px;top:190px;width:5px;height:1px;background:#111"></div><div class="a" style="left:32px;top:188px;width:1px;height:5px;background:#111"></div>
<div class="a" style="left:38px;top:191px;width:5px;border-top:1px dotted #888"></div>
<div class="t" style="left:64px;top:183.5px;font-size:11.6px">Planes</div>
<div class="a" style="left:28px;top:204px;width:9px;height:9px;border:1px solid #888;background:#fff"></div>
<div class="a" style="left:30px;top:208px;width:5px;height:1px;background:#111"></div><div class="a" style="left:32px;top:206px;width:1px;height:5px;background:#111"></div>
<div class="a" style="left:38px;top:209px;width:5px;border-top:1px dotted #888"></div>
<div class="t" style="left:64px;top:201.5px;font-size:11.6px">Lists</div>
<div class="a" style="left:32px;top:159px;height:46px;border-left:1px dotted #888"></div>
<div class="a" style="left:62px;top:145px;width:38px;height:17px;border:1px dotted #333"></div>
<svg class="a" style="left:43px;top:146px" width="18" height="18"><path d="M3 8 Q3 4 7 4 Q9 1 12 4 Q16 4 16 8 L12 16 H6 Z" fill="#ccc" stroke="#222"/><path d="M9 1 V16 M6 4 L9 1 L12 4" stroke="#111" fill="none"/></svg>
<svg class="a" style="left:44px;top:165px" width="18" height="18"><path d="M2 1 V15 H16 M2 15 L11 7" stroke="#111" stroke-width="1.4" fill="none"/><circle cx="16" cy="15" r="1" fill="#111"/></svg>
<svg class="a" style="left:43px;top:184px" width="18" height="16"><path d="M1 8 L5 4 H17 L13 8 Z M1 11 L5 7 H17 L13 11 Z M1 14 L5 10 H17 L13 14 Z" fill="#ddd" stroke="#111"/></svg>
<svg class="a" style="left:42px;top:201px" width="18" height="18"><path d="M1 11 L10 2 H17 V8 L8 17 H1 Z" fill="#e0a0a0" stroke="#a02020"/><path d="M4 10 L11 3 M7 12 L14 5" stroke="#a02020"/></svg>
<div class="a" style="left:22px;top:1017px;width:1896px;height:1px;background:#f4f4f6"></div>
<div class="a" style="left:0;top:1018px;width:1918px;height:8px;background:#8d919b;background-image:radial-gradient(#50545c 1px,transparent 1.3px);background-size:4px 4px"></div>
<div class="a" style="left:27px;top:1022px;width:99px;height:6px;background:#c8d0dc;border-radius:2px"></div>
<div class="a" style="left:143px;top:1022px;width:49px;height:6px;background:#c8d0dc;border-radius:2px"></div>
<svg class="a" style="left:193px;top:145px" width="1725" height="873" viewBox="193 145 1725 873"><rect x="193" y="145" width="1725" height="873" fill="#fff"/><g stroke-width="1"><line x1="193" y1="-658.9" x2="1918" y2="143.3" stroke="#c6c8d4"/><line x1="193" y1="-645.2" x2="1918" y2="156.9" stroke="#dfe0e8"/><line x1="193" y1="-631.6" x2="1918" y2="170.6" stroke="#dfe0e8"/><line x1="193" y1="-617.9" x2="1918" y2="184.2" stroke="#dfe0e8"/><line x1="193" y1="-604.3" x2="1918" y2="197.9" stroke="#dfe0e8"/><line x1="193" y1="-590.6" x2="1918" y2="211.5" stroke="#c6c8d4"/><line x1="193" y1="-577.0" x2="1918" y2="225.2" stroke="#dfe0e8"/><line x1="193" y1="-563.3" x2="1918" y2="238.8" stroke="#dfe0e8"/><line x1="193" y1="-549.7" x2="1918" y2="252.5" stroke="#dfe0e8"/><line x1="193" y1="-536.0" x2="1918" y2="266.1" stroke="#dfe0e8"/><line x1="193" y1="-522.4" x2="1918" y2="279.8" stroke="#c6c8d4"/><line x1="193" y1="-508.7" x2="1918" y2="293.4" stroke="#dfe0e8"/><line x1="193" y1="-495.1" x2="1918" y2="307.1" stroke="#dfe0e8"/><line x1="193" y1="-481.4" x2="1918" y2="320.7" stroke="#dfe0e8"/><line x1="193" y1="-467.8" x2="1918" y2="334.4" stroke="#dfe0e8"/><line x1="193" y1="-454.1" x2="1918" y2="348.0" stroke="#c6c8d4"/><line x1="193" y1="-440.5" x2="1918" y2="361.7" stroke="#dfe0e8"/><line x1="193" y1="-426.8" x2="1918" y2="375.3" stroke="#dfe0e8"/><line x1="193" y1="-413.2" x2="1918" y2="389.0" stroke="#dfe0e8"/><line x1="193" y1="-399.5" x2="1918" y2="402.6" stroke="#dfe0e8"/><line x1="193" y1="-385.9" x2="1918" y2="416.3" stroke="#c6c8d4"/><line x1="193" y1="-372.2" x2="1918" y2="429.9" stroke="#dfe0e8"/><line x1="193" y1="-358.6" x2="1918" y2="443.6" stroke="#dfe0e8"/><line x1="193" y1="-344.9" x2="1918" y2="457.2" stroke="#dfe0e8"/><line x1="193" y1="-331.3" x2="1918" y2="470.9" stroke="#dfe0e8"/><line x1="193" y1="-317.6" x2="1918" y2="484.5" stroke="#c6c8d4"/><line x1="193" y1="-304.0" x2="1918" y2="498.2" stroke="#dfe0e8"/><line x1="193" y1="-290.3" x2="1918" y2="511.8" stroke="#dfe0e8"/><line x1="193" y1="-276.7" x2="1918" y2="525.5" stroke="#dfe0e8"/><line x1="193" y1="-263.0" x2="1918" y2="539.1" stroke="#dfe0e8"/><line x1="193" y1="-249.4" x2="1918" y2="552.8" stroke="#c6c8d4"/><line x1="193" y1="-235.7" x2="1918" y2="566.4" stroke="#dfe0e8"/><line x1="193" y1="-222.1" x2="1918" y2="580.1" stroke="#dfe0e8"/><line x1="193" y1="-208.4" x2="1918" y2="593.7" stroke="#dfe0e8"/><line x1="193" y1="-194.8" x2="1918" y2="607.4" stroke="#dfe0e8"/><line x1="193" y1="-181.1" x2="1918" y2="621.0" stroke="#c6c8d4"/><line x1="193" y1="-167.5" x2="1918" y2="634.7" stroke="#dfe0e8"/><line x1="193" y1="-153.8" x2="1918" y2="648.3" stroke="#dfe0e8"/><line x1="193" y1="-140.2" x2="1918" y2="662.0" stroke="#dfe0e8"/><line x1="193" y1="-126.5" x2="1918" y2="675.6" stroke="#dfe0e8"/><line x1="193" y1="-112.9" x2="1918" y2="689.3" stroke="#c6c8d4"/><line x1="193" y1="-99.2" x2="1918" y2="702.9" stroke="#dfe0e8"/><line x1="193" y1="-85.6" x2="1918" y2="716.6" stroke="#dfe0e8"/><line x1="193" y1="-71.9" x2="1918" y2="730.2" stroke="#dfe0e8"/><line x1="193" y1="-58.3" x2="1918" y2="743.9" stroke="#dfe0e8"/><line x1="193" y1="-44.6" x2="1918" y2="757.5" stroke="#c6c8d4"/><line x1="193" y1="-31.0" x2="1918" y2="771.2" stroke="#dfe0e8"/><line x1="193" y1="-17.3" x2="1918" y2="784.8" stroke="#dfe0e8"/><line x1="193" y1="-3.7" x2="1918" y2="798.5" stroke="#dfe0e8"/><line x1="193" y1="10.0" x2="1918" y2="812.1" stroke="#dfe0e8"/><line x1="193" y1="23.6" x2="1918" y2="825.8" stroke="#c6c8d4"/><line x1="193" y1="37.3" x2="1918" y2="839.4" stroke="#dfe0e8"/><line x1="193" y1="50.9" x2="1918" y2="853.1" stroke="#dfe0e8"/><line x1="193" y1="64.6" x2="1918" y2="866.7" stroke="#dfe0e8"/><line x1="193" y1="78.2" x2="1918" y2="880.4" stroke="#dfe0e8"/><line x1="193" y1="91.9" x2="1918" y2="894.0" stroke="#c6c8d4"/><line x1="193" y1="105.5" x2="1918" y2="907.7" stroke="#dfe0e8"/><line x1="193" y1="119.2" x2="1918" y2="921.3" stroke="#dfe0e8"/><line x1="193" y1="132.8" x2="1918" y2="935.0" stroke="#dfe0e8"/><line x1="193" y1="146.5" x2="1918" y2="948.6" stroke="#dfe0e8"/><line x1="193" y1="160.1" x2="1918" y2="962.3" stroke="#c6c8d4"/><line x1="193" y1="173.8" x2="1918" y2="975.9" stroke="#dfe0e8"/><line x1="193" y1="187.4" x2="1918" y2="989.6" stroke="#dfe0e8"/><line x1="193" y1="201.1" x2="1918" y2="1003.2" stroke="#dfe0e8"/><line x1="193" y1="214.7" x2="1918" y2="1016.9" stroke="#dfe0e8"/><line x1="193" y1="228.4" x2="1918" y2="1030.5" stroke="#c6c8d4"/><line x1="193" y1="242.0" x2="1918" y2="1044.2" stroke="#dfe0e8"/><line x1="193" y1="255.7" x2="1918" y2="1057.8" stroke="#dfe0e8"/><line x1="193" y1="269.3" x2="1918" y2="1071.5" stroke="#dfe0e8"/><line x1="193" y1="283.0" x2="1918" y2="1085.1" stroke="#dfe0e8"/><line x1="193" y1="296.6" x2="1918" y2="1098.8" stroke="#c6c8d4"/><line x1="193" y1="310.3" x2="1918" y2="1112.4" stroke="#dfe0e8"/><line x1="193" y1="323.9" x2="1918" y2="1126.1" stroke="#dfe0e8"/><line x1="193" y1="337.6" x2="1918" y2="1139.7" stroke="#dfe0e8"/><line x1="193" y1="351.2" x2="1918" y2="1153.4" stroke="#dfe0e8"/><line x1="193" y1="364.9" x2="1918" y2="1167.0" stroke="#c6c8d4"/><line x1="193" y1="378.5" x2="1918" y2="1180.7" stroke="#dfe0e8"/><line x1="193" y1="392.2" x2="1918" y2="1194.3" stroke="#dfe0e8"/><line x1="193" y1="405.8" x2="1918" y2="1208.0" stroke="#dfe0e8"/><line x1="193" y1="419.5" x2="1918" y2="1221.6" stroke="#dfe0e8"/><line x1="193" y1="433.1" x2="1918" y2="1235.3" stroke="#c6c8d4"/><line x1="193" y1="446.8" x2="1918" y2="1248.9" stroke="#dfe0e8"/><line x1="193" y1="460.4" x2="1918" y2="1262.6" stroke="#dfe0e8"/><line x1="193" y1="474.1" x2="1918" y2="1276.2" stroke="#dfe0e8"/><line x1="193" y1="487.7" x2="1918" y2="1289.9" stroke="#dfe0e8"/><line x1="193" y1="501.4" x2="1918" y2="1303.5" stroke="#c6c8d4"/><line x1="193" y1="515.0" x2="1918" y2="1317.2" stroke="#dfe0e8"/><line x1="193" y1="528.7" x2="1918" y2="1330.8" stroke="#dfe0e8"/><line x1="193" y1="542.3" x2="1918" y2="1344.5" stroke="#dfe0e8"/><line x1="193" y1="556.0" x2="1918" y2="1358.1" stroke="#dfe0e8"/><line x1="193" y1="569.6" x2="1918" y2="1371.8" stroke="#c6c8d4"/><line x1="193" y1="583.3" x2="1918" y2="1385.4" stroke="#dfe0e8"/><line x1="193" y1="596.9" x2="1918" y2="1399.1" stroke="#dfe0e8"/><line x1="193" y1="610.6" x2="1918" y2="1412.7" stroke="#dfe0e8"/><line x1="193" y1="624.2" x2="1918" y2="1426.4" stroke="#dfe0e8"/><line x1="193" y1="637.9" x2="1918" y2="1440.0" stroke="#c6c8d4"/><line x1="193" y1="651.5" x2="1918" y2="1453.7" stroke="#dfe0e8"/><line x1="193" y1="665.2" x2="1918" y2="1467.3" stroke="#dfe0e8"/><line x1="193" y1="678.8" x2="1918" y2="1481.0" stroke="#dfe0e8"/><line x1="193" y1="692.5" x2="1918" y2="1494.6" stroke="#dfe0e8"/><line x1="193" y1="706.1" x2="1918" y2="1508.3" stroke="#c6c8d4"/><line x1="193" y1="719.8" x2="1918" y2="1521.9" stroke="#dfe0e8"/><line x1="193" y1="733.4" x2="1918" y2="1535.6" stroke="#dfe0e8"/><line x1="193" y1="747.1" x2="1918" y2="1549.2" stroke="#dfe0e8"/><line x1="193" y1="760.7" x2="1918" y2="1562.9" stroke="#dfe0e8"/><line x1="193" y1="774.4" x2="1918" y2="1576.5" stroke="#c6c8d4"/><line x1="193" y1="788.0" x2="1918" y2="1590.2" stroke="#dfe0e8"/><line x1="193" y1="801.7" x2="1918" y2="1603.8" stroke="#dfe0e8"/><line x1="193" y1="815.3" x2="1918" y2="1617.5" stroke="#dfe0e8"/><line x1="193" y1="829.0" x2="1918" y2="1631.1" stroke="#dfe0e8"/><line x1="193" y1="842.6" x2="1918" y2="1644.8" stroke="#c6c8d4"/><line x1="193" y1="856.3" x2="1918" y2="1658.4" stroke="#dfe0e8"/><line x1="193" y1="869.9" x2="1918" y2="1672.1" stroke="#dfe0e8"/><line x1="193" y1="883.6" x2="1918" y2="1685.7" stroke="#dfe0e8"/><line x1="193" y1="897.2" x2="1918" y2="1699.4" stroke="#dfe0e8"/><line x1="193" y1="910.9" x2="1918" y2="1713.0" stroke="#c6c8d4"/><line x1="193" y1="924.5" x2="1918" y2="1726.7" stroke="#dfe0e8"/><line x1="193" y1="938.2" x2="1918" y2="1740.3" stroke="#dfe0e8"/><line x1="193" y1="951.8" x2="1918" y2="1754.0" stroke="#dfe0e8"/><line x1="193" y1="965.5" x2="1918" y2="1767.6" stroke="#dfe0e8"/><line x1="193" y1="979.1" x2="1918" y2="1781.3" stroke="#c6c8d4"/><line x1="193" y1="992.8" x2="1918" y2="1794.9" stroke="#dfe0e8"/><line x1="193" y1="1006.4" x2="1918" y2="1808.6" stroke="#dfe0e8"/><line x1="52.1" y1="145" x2="187.4" y2="1018" stroke="#dfe0e8"/><line x1="67.3" y1="145" x2="202.6" y2="1018" stroke="#dfe0e8"/><line x1="82.5" y1="145" x2="217.8" y2="1018" stroke="#dfe0e8"/><line x1="97.7" y1="145" x2="233.0" y2="1018" stroke="#dfe0e8"/><line x1="112.9" y1="145" x2="248.2" y2="1018" stroke="#c6c8d4"/><line x1="128.1" y1="145" x2="263.4" y2="1018" stroke="#dfe0e8"/><line x1="143.3" y1="145" x2="278.6" y2="1018" stroke="#dfe0e8"/><line x1="158.5" y1="145" x2="293.8" y2="1018" stroke="#dfe0e8"/><line x1="173.7" y1="145" x2="309.0" y2="1018" stroke="#dfe0e8"/><line x1="188.9" y1="145" x2="324.2" y2="1018" stroke="#c6c8d4"/><line x1="204.1" y1="145" x2="339.4" y2="1018" stroke="#dfe0e8"/><line x1="219.3" y1="145" x2="354.6" y2="1018" stroke="#dfe0e8"/><line x1="234.5" y1="145" x2="369.8" y2="1018" stroke="#dfe0e8"/><line x1="249.7" y1="145" x2="385.0" y2="1018" stroke="#dfe0e8"/><line x1="264.9" y1="145" x2="400.2" y2="1018" stroke="#c6c8d4"/><line x1="280.1" y1="145" x2="415.4" y2="1018" stroke="#dfe0e8"/><line x1="295.3" y1="145" x2="430.6" y2="1018" stroke="#dfe0e8"/><line x1="310.5" y1="145" x2="445.8" y2="1018" stroke="#dfe0e8"/><line x1="325.7" y1="145" x2="461.0" y2="1018" stroke="#dfe0e8"/><line x1="340.9" y1="145" x2="476.2" y2="1018" stroke="#c6c8d4"/><line x1="356.1" y1="145" x2="491.4" y2="1018" stroke="#dfe0e8"/><line x1="371.3" y1="145" x2="506.6" y2="1018" stroke="#dfe0e8"/><line x1="386.5" y1="145" x2="521.8" y2="1018" stroke="#dfe0e8"/><line x1="401.7" y1="145" x2="537.0" y2="1018" stroke="#dfe0e8"/><line x1="416.9" y1="145" x2="552.2" y2="1018" stroke="#c6c8d4"/><line x1="432.1" y1="145" x2="567.4" y2="1018" stroke="#dfe0e8"/><line x1="447.3" y1="145" x2="582.6" y2="1018" stroke="#dfe0e8"/><line x1="462.5" y1="145" x2="597.8" y2="1018" stroke="#dfe0e8"/><line x1="477.7" y1="145" x2="613.0" y2="1018" stroke="#dfe0e8"/><line x1="492.9" y1="145" x2="628.2" y2="1018" stroke="#c6c8d4"/><line x1="508.1" y1="145" x2="643.4" y2="1018" stroke="#dfe0e8"/><line x1="523.3" y1="145" x2="658.6" y2="1018" stroke="#dfe0e8"/><line x1="538.5" y1="145" x2="673.8" y2="1018" stroke="#dfe0e8"/><line x1="553.7" y1="145" x2="689.0" y2="1018" stroke="#dfe0e8"/><line x1="568.9" y1="145" x2="704.2" y2="1018" stroke="#c6c8d4"/><line x1="584.1" y1="145" x2="719.4" y2="1018" stroke="#dfe0e8"/><line x1="599.3" y1="145" x2="734.6" y2="1018" stroke="#dfe0e8"/><line x1="614.5" y1="145" x2="749.8" y2="1018" stroke="#dfe0e8"/><line x1="629.7" y1="145" x2="765.0" y2="1018" stroke="#dfe0e8"/><line x1="644.9" y1="145" x2="780.2" y2="1018" stroke="#c6c8d4"/><line x1="660.1" y1="145" x2="795.4" y2="1018" stroke="#dfe0e8"/><line x1="675.3" y1="145" x2="810.6" y2="1018" stroke="#dfe0e8"/><line x1="690.5" y1="145" x2="825.8" y2="1018" stroke="#dfe0e8"/><line x1="705.7" y1="145" x2="841.0" y2="1018" stroke="#dfe0e8"/><line x1="720.9" y1="145" x2="856.2" y2="1018" stroke="#c6c8d4"/><line x1="736.1" y1="145" x2="871.4" y2="1018" stroke="#dfe0e8"/><line x1="751.3" y1="145" x2="886.6" y2="1018" stroke="#dfe0e8"/><line x1="766.5" y1="145" x2="901.8" y2="1018" stroke="#dfe0e8"/><line x1="781.7" y1="145" x2="917.0" y2="1018" stroke="#dfe0e8"/><line x1="796.9" y1="145" x2="932.2" y2="1018" stroke="#c6c8d4"/><line x1="812.1" y1="145" x2="947.4" y2="1018" stroke="#dfe0e8"/><line x1="827.3" y1="145" x2="962.6" y2="1018" stroke="#dfe0e8"/><line x1="842.5" y1="145" x2="977.8" y2="1018" stroke="#dfe0e8"/><line x1="857.7" y1="145" x2="993.0" y2="1018" stroke="#dfe0e8"/><line x1="872.9" y1="145" x2="1008.2" y2="1018" stroke="#c6c8d4"/><line x1="888.1" y1="145" x2="1023.4" y2="1018" stroke="#dfe0e8"/><line x1="903.3" y1="145" x2="1038.6" y2="1018" stroke="#dfe0e8"/><line x1="918.5" y1="145" x2="1053.8" y2="1018" stroke="#dfe0e8"/><line x1="933.7" y1="145" x2="1069.0" y2="1018" stroke="#dfe0e8"/><line x1="948.9" y1="145" x2="1084.2" y2="1018" stroke="#c6c8d4"/><line x1="964.1" y1="145" x2="1099.4" y2="1018" stroke="#dfe0e8"/><line x1="979.3" y1="145" x2="1114.6" y2="1018" stroke="#dfe0e8"/><line x1="994.5" y1="145" x2="1129.8" y2="1018" stroke="#dfe0e8"/><line x1="1009.7" y1="145" x2="1145.0" y2="1018" stroke="#dfe0e8"/><line x1="1024.9" y1="145" x2="1160.2" y2="1018" stroke="#c6c8d4"/><line x1="1040.1" y1="145" x2="1175.4" y2="1018" stroke="#dfe0e8"/><line x1="1055.3" y1="145" x2="1190.6" y2="1018" stroke="#dfe0e8"/><line x1="1070.5" y1="145" x2="1205.8" y2="1018" stroke="#dfe0e8"/><line x1="1085.7" y1="145" x2="1221.0" y2="1018" stroke="#dfe0e8"/><line x1="1100.9" y1="145" x2="1236.2" y2="1018" stroke="#c6c8d4"/><line x1="1116.1" y1="145" x2="1251.4" y2="1018" stroke="#dfe0e8"/><line x1="1131.3" y1="145" x2="1266.6" y2="1018" stroke="#dfe0e8"/><line x1="1146.5" y1="145" x2="1281.8" y2="1018" stroke="#dfe0e8"/><line x1="1161.7" y1="145" x2="1297.0" y2="1018" stroke="#dfe0e8"/><line x1="1176.9" y1="145" x2="1312.2" y2="1018" stroke="#c6c8d4"/><line x1="1192.1" y1="145" x2="1327.4" y2="1018" stroke="#dfe0e8"/><line x1="1207.3" y1="145" x2="1342.6" y2="1018" stroke="#dfe0e8"/><line x1="1222.5" y1="145" x2="1357.8" y2="1018" stroke="#dfe0e8"/><line x1="1237.7" y1="145" x2="1373.0" y2="1018" stroke="#dfe0e8"/><line x1="1252.9" y1="145" x2="1388.2" y2="1018" stroke="#c6c8d4"/><line x1="1268.1" y1="145" x2="1403.4" y2="1018" stroke="#dfe0e8"/><line x1="1283.3" y1="145" x2="1418.6" y2="1018" stroke="#dfe0e8"/><line x1="1298.5" y1="145" x2="1433.8" y2="1018" stroke="#dfe0e8"/><line x1="1313.7" y1="145" x2="1449.0" y2="1018" stroke="#dfe0e8"/><line x1="1328.9" y1="145" x2="1464.2" y2="1018" stroke="#c6c8d4"/><line x1="1344.1" y1="145" x2="1479.4" y2="1018" stroke="#dfe0e8"/><line x1="1359.3" y1="145" x2="1494.6" y2="1018" stroke="#dfe0e8"/><line x1="1374.5" y1="145" x2="1509.8" y2="1018" stroke="#dfe0e8"/><line x1="1389.7" y1="145" x2="1525.0" y2="1018" stroke="#dfe0e8"/><line x1="1404.9" y1="145" x2="1540.2" y2="1018" stroke="#c6c8d4"/><line x1="1420.1" y1="145" x2="1555.4" y2="1018" stroke="#dfe0e8"/><line x1="1435.3" y1="145" x2="1570.6" y2="1018" stroke="#dfe0e8"/><line x1="1450.5" y1="145" x2="1585.8" y2="1018" stroke="#dfe0e8"/><line x1="1465.7" y1="145" x2="1601.0" y2="1018" stroke="#dfe0e8"/><line x1="1480.9" y1="145" x2="1616.2" y2="1018" stroke="#c6c8d4"/><line x1="1496.1" y1="145" x2="1631.4" y2="1018" stroke="#dfe0e8"/><line x1="1511.3" y1="145" x2="1646.6" y2="1018" stroke="#dfe0e8"/><line x1="1526.5" y1="145" x2="1661.8" y2="1018" stroke="#dfe0e8"/><line x1="1541.7" y1="145" x2="1677.0" y2="1018" stroke="#dfe0e8"/><line x1="1556.9" y1="145" x2="1692.2" y2="1018" stroke="#c6c8d4"/><line x1="1572.1" y1="145" x2="1707.4" y2="1018" stroke="#dfe0e8"/><line x1="1587.3" y1="145" x2="1722.6" y2="1018" stroke="#dfe0e8"/><line x1="1602.5" y1="145" x2="1737.8" y2="1018" stroke="#dfe0e8"/><line x1="1617.7" y1="145" x2="1753.0" y2="1018" stroke="#dfe0e8"/><line x1="1632.9" y1="145" x2="1768.2" y2="1018" stroke="#c6c8d4"/><line x1="1648.1" y1="145" x2="1783.4" y2="1018" stroke="#dfe0e8"/><line x1="1663.3" y1="145" x2="1798.6" y2="1018" stroke="#dfe0e8"/><line x1="1678.5" y1="145" x2="1813.8" y2="1018" stroke="#dfe0e8"/><line x1="1693.7" y1="145" x2="1829.0" y2="1018" stroke="#dfe0e8"/><line x1="1708.9" y1="145" x2="1844.2" y2="1018" stroke="#c6c8d4"/><line x1="1724.1" y1="145" x2="1859.4" y2="1018" stroke="#dfe0e8"/><line x1="1739.3" y1="145" x2="1874.6" y2="1018" stroke="#dfe0e8"/><line x1="1754.5" y1="145" x2="1889.8" y2="1018" stroke="#dfe0e8"/><line x1="1769.7" y1="145" x2="1905.0" y2="1018" stroke="#dfe0e8"/><line x1="1784.9" y1="145" x2="1920.2" y2="1018" stroke="#c6c8d4"/><line x1="1800.1" y1="145" x2="1935.4" y2="1018" stroke="#dfe0e8"/><line x1="1815.3" y1="145" x2="1950.6" y2="1018" stroke="#dfe0e8"/><line x1="1830.5" y1="145" x2="1965.8" y2="1018" stroke="#dfe0e8"/><line x1="1845.7" y1="145" x2="1981.0" y2="1018" stroke="#dfe0e8"/><line x1="1860.9" y1="145" x2="1996.2" y2="1018" stroke="#c6c8d4"/><line x1="1876.1" y1="145" x2="2011.4" y2="1018" stroke="#dfe0e8"/><line x1="1891.3" y1="145" x2="2026.6" y2="1018" stroke="#dfe0e8"/><line x1="1906.5" y1="145" x2="2041.8" y2="1018" stroke="#dfe0e8"/></g><line x1="341" y1="298" x2="560" y2="400" stroke="#d8a8a8" stroke-width="1"/><line x1="1828" y1="996" x2="1890" y2="1018" stroke="#d8a8a8" stroke-width="1"/><polygon points="507,145 617,845 982,1018 1453,1018 1360,436 739,145" fill="#2a6864" fill-opacity="0.92"/><polyline points="506,145 616,845 981,1018" fill="none" stroke="#c8f8f8" stroke-width="1.5" opacity="0.9"/><clipPath id="slabclip"><polygon points="507,145 617,845 982,1018 1453,1018 1360,436 739,145"/></clipPath><g clip-path="url(#slabclip)" stroke="#1a4e4c" stroke-width="1" opacity="0.35"><line x1="193" y1="-658.9" x2="1918" y2="143.3"/><line x1="193" y1="-645.2" x2="1918" y2="156.9"/><line x1="193" y1="-631.6" x2="1918" y2="170.6"/><line x1="193" y1="-617.9" x2="1918" y2="184.2"/><line x1="193" y1="-604.3" x2="1918" y2="197.9"/><line x1="193" y1="-590.6" x2="1918" y2="211.5"/><line x1="193" y1="-577.0" x2="1918" y2="225.2"/><line x1="193" y1="-563.3" x2="1918" y2="238.8"/><line x1="193" y1="-549.7" x2="1918" y2="252.5"/><line x1="193" y1="-536.0" x2="1918" y2="266.1"/><line x1="193" y1="-522.4" x2="1918" y2="279.8"/><line x1="193" y1="-508.7" x2="1918" y2="293.4"/><line x1="193" y1="-495.1" x2="1918" y2="307.1"/><line x1="193" y1="-481.4" x2="1918" y2="320.7"/><line x1="193" y1="-467.8" x2="1918" y2="334.4"/><line x1="193" y1="-454.1" x2="1918" y2="348.0"/><line x1="193" y1="-440.5" x2="1918" y2="361.7"/><line x1="193" y1="-426.8" x2="1918" y2="375.3"/><line x1="193" y1="-413.2" x2="1918" y2="389.0"/><line x1="193" y1="-399.5" x2="1918" y2="402.6"/><line x1="193" y1="-385.9" x2="1918" y2="416.3"/><line x1="193" y1="-372.2" x2="1918" y2="429.9"/><line x1="193" y1="-358.6" x2="1918" y2="443.6"/><line x1="193" y1="-344.9" x2="1918" y2="457.2"/><line x1="193" y1="-331.3" x2="1918" y2="470.9"/><line x1="193" y1="-317.6" x2="1918" y2="484.5"/><line x1="193" y1="-304.0" x2="1918" y2="498.2"/><line x1="193" y1="-290.3" x2="1918" y2="511.8"/><line x1="193" y1="-276.7" x2="1918" y2="525.5"/><line x1="193" y1="-263.0" x2="1918" y2="539.1"/><line x1="193" y1="-249.4" x2="1918" y2="552.8"/><line x1="193" y1="-235.7" x2="1918" y2="566.4"/><line x1="193" y1="-222.1" x2="1918" y2="580.1"/><line x1="193" y1="-208.4" x2="1918" y2="593.7"/><line x1="193" y1="-194.8" x2="1918" y2="607.4"/><line x1="193" y1="-181.1" x2="1918" y2="621.0"/><line x1="193" y1="-167.5" x2="1918" y2="634.7"/><line x1="193" y1="-153.8" x2="1918" y2="648.3"/><line x1="193" y1="-140.2" x2="1918" y2="662.0"/><line x1="193" y1="-126.5" x2="1918" y2="675.6"/><line x1="193" y1="-112.9" x2="1918" y2="689.3"/><line x1="193" y1="-99.2" x2="1918" y2="702.9"/><line x1="193" y1="-85.6" x2="1918" y2="716.6"/><line x1="193" y1="-71.9" x2="1918" y2="730.2"/><line x1="193" y1="-58.3" x2="1918" y2="743.9"/><line x1="193" y1="-44.6" x2="1918" y2="757.5"/><line x1="193" y1="-31.0" x2="1918" y2="771.2"/><line x1="193" y1="-17.3" x2="1918" y2="784.8"/><line x1="193" y1="-3.7" x2="1918" y2="798.5"/><line x1="193" y1="10.0" x2="1918" y2="812.1"/><line x1="193" y1="23.6" x2="1918" y2="825.8"/><line x1="193" y1="37.3" x2="1918" y2="839.4"/><line x1="193" y1="50.9" x2="1918" y2="853.1"/><line x1="193" y1="64.6" x2="1918" y2="866.7"/><line x1="193" y1="78.2" x2="1918" y2="880.4"/><line x1="193" y1="91.9" x2="1918" y2="894.0"/><line x1="193" y1="105.5" x2="1918" y2="907.7"/><line x1="193" y1="119.2" x2="1918" y2="921.3"/><line x1="193" y1="132.8" x2="1918" y2="935.0"/><line x1="193" y1="146.5" x2="1918" y2="948.6"/><line x1="193" y1="160.1" x2="1918" y2="962.3"/><line x1="193" y1="173.8" x2="1918" y2="975.9"/><line x1="193" y1="187.4" x2="1918" y2="989.6"/><line x1="193" y1="201.1" x2="1918" y2="1003.2"/><line x1="193" y1="214.7" x2="1918" y2="1016.9"/><line x1="193" y1="228.4" x2="1918" y2="1030.5"/><line x1="193" y1="242.0" x2="1918" y2="1044.2"/><line x1="193" y1="255.7" x2="1918" y2="1057.8"/><line x1="193" y1="269.3" x2="1918" y2="1071.5"/><line x1="193" y1="283.0" x2="1918" y2="1085.1"/><line x1="193" y1="296.6" x2="1918" y2="1098.8"/><line x1="193" y1="310.3" x2="1918" y2="1112.4"/><line x1="193" y1="323.9" x2="1918" y2="1126.1"/><line x1="193" y1="337.6" x2="1918" y2="1139.7"/><line x1="193" y1="351.2" x2="1918" y2="1153.4"/><line x1="193" y1="364.9" x2="1918" y2="1167.0"/><line x1="193" y1="378.5" x2="1918" y2="1180.7"/><line x1="193" y1="392.2" x2="1918" y2="1194.3"/><line x1="193" y1="405.8" x2="1918" y2="1208.0"/><line x1="193" y1="419.5" x2="1918" y2="1221.6"/><line x1="193" y1="433.1" x2="1918" y2="1235.3"/><line x1="193" y1="446.8" x2="1918" y2="1248.9"/><line x1="193" y1="460.4" x2="1918" y2="1262.6"/><line x1="193" y1="474.1" x2="1918" y2="1276.2"/><line x1="193" y1="487.7" x2="1918" y2="1289.9"/><line x1="193" y1="501.4" x2="1918" y2="1303.5"/><line x1="193" y1="515.0" x2="1918" y2="1317.2"/><line x1="193" y1="528.7" x2="1918" y2="1330.8"/><line x1="193" y1="542.3" x2="1918" y2="1344.5"/><line x1="193" y1="556.0" x2="1918" y2="1358.1"/><line x1="193" y1="569.6" x2="1918" y2="1371.8"/><line x1="193" y1="583.3" x2="1918" y2="1385.4"/><line x1="193" y1="596.9" x2="1918" y2="1399.1"/><line x1="193" y1="610.6" x2="1918" y2="1412.7"/><line x1="193" y1="624.2" x2="1918" y2="1426.4"/><line x1="193" y1="637.9" x2="1918" y2="1440.0"/><line x1="193" y1="651.5" x2="1918" y2="1453.7"/><line x1="193" y1="665.2" x2="1918" y2="1467.3"/><line x1="193" y1="678.8" x2="1918" y2="1481.0"/><line x1="193" y1="692.5" x2="1918" y2="1494.6"/><line x1="193" y1="706.1" x2="1918" y2="1508.3"/><line x1="193" y1="719.8" x2="1918" y2="1521.9"/><line x1="193" y1="733.4" x2="1918" y2="1535.6"/><line x1="193" y1="747.1" x2="1918" y2="1549.2"/><line x1="193" y1="760.7" x2="1918" y2="1562.9"/><line x1="193" y1="774.4" x2="1918" y2="1576.5"/><line x1="193" y1="788.0" x2="1918" y2="1590.2"/><line x1="193" y1="801.7" x2="1918" y2="1603.8"/><line x1="193" y1="815.3" x2="1918" y2="1617.5"/><line x1="193" y1="829.0" x2="1918" y2="1631.1"/><line x1="193" y1="842.6" x2="1918" y2="1644.8"/><line x1="193" y1="856.3" x2="1918" y2="1658.4"/><line x1="193" y1="869.9" x2="1918" y2="1672.1"/><line x1="193" y1="883.6" x2="1918" y2="1685.7"/><line x1="193" y1="897.2" x2="1918" y2="1699.4"/><line x1="193" y1="910.9" x2="1918" y2="1713.0"/><line x1="193" y1="924.5" x2="1918" y2="1726.7"/><line x1="193" y1="938.2" x2="1918" y2="1740.3"/><line x1="193" y1="951.8" x2="1918" y2="1754.0"/><line x1="193" y1="965.5" x2="1918" y2="1767.6"/><line x1="193" y1="979.1" x2="1918" y2="1781.3"/><line x1="193" y1="992.8" x2="1918" y2="1794.9"/><line x1="193" y1="1006.4" x2="1918" y2="1808.6"/><line x1="52.1" y1="145" x2="187.4" y2="1018"/><line x1="67.3" y1="145" x2="202.6" y2="1018"/><line x1="82.5" y1="145" x2="217.8" y2="1018"/><line x1="97.7" y1="145" x2="233.0" y2="1018"/><line x1="112.9" y1="145" x2="248.2" y2="1018"/><line x1="128.1" y1="145" x2="263.4" y2="1018"/><line x1="143.3" y1="145" x2="278.6" y2="1018"/><line x1="158.5" y1="145" x2="293.8" y2="1018"/><line x1="173.7" y1="145" x2="309.0" y2="1018"/><line x1="188.9" y1="145" x2="324.2" y2="1018"/><line x1="204.1" y1="145" x2="339.4" y2="1018"/><line x1="219.3" y1="145" x2="354.6" y2="1018"/><line x1="234.5" y1="145" x2="369.8" y2="1018"/><line x1="249.7" y1="145" x2="385.0" y2="1018"/><line x1="264.9" y1="145" x2="400.2" y2="1018"/><line x1="280.1" y1="145" x2="415.4" y2="1018"/><line x1="295.3" y1="145" x2="430.6" y2="1018"/><line x1="310.5" y1="145" x2="445.8" y2="1018"/><line x1="325.7" y1="145" x2="461.0" y2="1018"/><line x1="340.9" y1="145" x2="476.2" y2="1018"/><line x1="356.1" y1="145" x2="491.4" y2="1018"/><line x1="371.3" y1="145" x2="506.6" y2="1018"/><line x1="386.5" y1="145" x2="521.8" y2="1018"/><line x1="401.7" y1="145" x2="537.0" y2="1018"/><line x1="416.9" y1="145" x2="552.2" y2="1018"/><line x1="432.1" y1="145" x2="567.4" y2="1018"/><line x1="447.3" y1="145" x2="582.6" y2="1018"/><line x1="462.5" y1="145" x2="597.8" y2="1018"/><line x1="477.7" y1="145" x2="613.0" y2="1018"/><line x1="492.9" y1="145" x2="628.2" y2="1018"/><line x1="508.1" y1="145" x2="643.4" y2="1018"/><line x1="523.3" y1="145" x2="658.6" y2="1018"/><line x1="538.5" y1="145" x2="673.8" y2="1018"/><line x1="553.7" y1="145" x2="689.0" y2="1018"/><line x1="568.9" y1="145" x2="704.2" y2="1018"/><line x1="584.1" y1="145" x2="719.4" y2="1018"/><line x1="599.3" y1="145" x2="734.6" y2="1018"/><line x1="614.5" y1="145" x2="749.8" y2="1018"/><line x1="629.7" y1="145" x2="765.0" y2="1018"/><line x1="644.9" y1="145" x2="780.2" y2="1018"/><line x1="660.1" y1="145" x2="795.4" y2="1018"/><line x1="675.3" y1="145" x2="810.6" y2="1018"/><line x1="690.5" y1="145" x2="825.8" y2="1018"/><line x1="705.7" y1="145" x2="841.0" y2="1018"/><line x1="720.9" y1="145" x2="856.2" y2="1018"/><line x1="736.1" y1="145" x2="871.4" y2="1018"/><line x1="751.3" y1="145" x2="886.6" y2="1018"/><line x1="766.5" y1="145" x2="901.8" y2="1018"/><line x1="781.7" y1="145" x2="917.0" y2="1018"/><line x1="796.9" y1="145" x2="932.2" y2="1018"/><line x1="812.1" y1="145" x2="947.4" y2="1018"/><line x1="827.3" y1="145" x2="962.6" y2="1018"/><line x1="842.5" y1="145" x2="977.8" y2="1018"/><line x1="857.7" y1="145" x2="993.0" y2="1018"/><line x1="872.9" y1="145" x2="1008.2" y2="1018"/><line x1="888.1" y1="145" x2="1023.4" y2="1018"/><line x1="903.3" y1="145" x2="1038.6" y2="1018"/><line x1="918.5" y1="145" x2="1053.8" y2="1018"/><line x1="933.7" y1="145" x2="1069.0" y2="1018"/><line x1="948.9" y1="145" x2="1084.2" y2="1018"/><line x1="964.1" y1="145" x2="1099.4" y2="1018"/><line x1="979.3" y1="145" x2="1114.6" y2="1018"/><line x1="994.5" y1="145" x2="1129.8" y2="1018"/><line x1="1009.7" y1="145" x2="1145.0" y2="1018"/><line x1="1024.9" y1="145" x2="1160.2" y2="1018"/><line x1="1040.1" y1="145" x2="1175.4" y2="1018"/><line x1="1055.3" y1="145" x2="1190.6" y2="1018"/><line x1="1070.5" y1="145" x2="1205.8" y2="1018"/><line x1="1085.7" y1="145" x2="1221.0" y2="1018"/><line x1="1100.9" y1="145" x2="1236.2" y2="1018"/><line x1="1116.1" y1="145" x2="1251.4" y2="1018"/><line x1="1131.3" y1="145" x2="1266.6" y2="1018"/><line x1="1146.5" y1="145" x2="1281.8" y2="1018"/><line x1="1161.7" y1="145" x2="1297.0" y2="1018"/><line x1="1176.9" y1="145" x2="1312.2" y2="1018"/><line x1="1192.1" y1="145" x2="1327.4" y2="1018"/><line x1="1207.3" y1="145" x2="1342.6" y2="1018"/><line x1="1222.5" y1="145" x2="1357.8" y2="1018"/><line x1="1237.7" y1="145" x2="1373.0" y2="1018"/><line x1="1252.9" y1="145" x2="1388.2" y2="1018"/><line x1="1268.1" y1="145" x2="1403.4" y2="1018"/><line x1="1283.3" y1="145" x2="1418.6" y2="1018"/><line x1="1298.5" y1="145" x2="1433.8" y2="1018"/><line x1="1313.7" y1="145" x2="1449.0" y2="1018"/><line x1="1328.9" y1="145" x2="1464.2" y2="1018"/><line x1="1344.1" y1="145" x2="1479.4" y2="1018"/><line x1="1359.3" y1="145" x2="1494.6" y2="1018"/><line x1="1374.5" y1="145" x2="1509.8" y2="1018"/><line x1="1389.7" y1="145" x2="1525.0" y2="1018"/><line x1="1404.9" y1="145" x2="1540.2" y2="1018"/><line x1="1420.1" y1="145" x2="1555.4" y2="1018"/><line x1="1435.3" y1="145" x2="1570.6" y2="1018"/><line x1="1450.5" y1="145" x2="1585.8" y2="1018"/><line x1="1465.7" y1="145" x2="1601.0" y2="1018"/><line x1="1480.9" y1="145" x2="1616.2" y2="1018"/><line x1="1496.1" y1="145" x2="1631.4" y2="1018"/><line x1="1511.3" y1="145" x2="1646.6" y2="1018"/><line x1="1526.5" y1="145" x2="1661.8" y2="1018"/><line x1="1541.7" y1="145" x2="1677.0" y2="1018"/><line x1="1556.9" y1="145" x2="1692.2" y2="1018"/><line x1="1572.1" y1="145" x2="1707.4" y2="1018"/><line x1="1587.3" y1="145" x2="1722.6" y2="1018"/><line x1="1602.5" y1="145" x2="1737.8" y2="1018"/><line x1="1617.7" y1="145" x2="1753.0" y2="1018"/><line x1="1632.9" y1="145" x2="1768.2" y2="1018"/><line x1="1648.1" y1="145" x2="1783.4" y2="1018"/><line x1="1663.3" y1="145" x2="1798.6" y2="1018"/><line x1="1678.5" y1="145" x2="1813.8" y2="1018"/><line x1="1693.7" y1="145" x2="1829.0" y2="1018"/><line x1="1708.9" y1="145" x2="1844.2" y2="1018"/><line x1="1724.1" y1="145" x2="1859.4" y2="1018"/><line x1="1739.3" y1="145" x2="1874.6" y2="1018"/><line x1="1754.5" y1="145" x2="1889.8" y2="1018"/><line x1="1769.7" y1="145" x2="1905.0" y2="1018"/><line x1="1784.9" y1="145" x2="1920.2" y2="1018"/><line x1="1800.1" y1="145" x2="1935.4" y2="1018"/><line x1="1815.3" y1="145" x2="1950.6" y2="1018"/><line x1="1830.5" y1="145" x2="1965.8" y2="1018"/><line x1="1845.7" y1="145" x2="1981.0" y2="1018"/><line x1="1860.9" y1="145" x2="1996.2" y2="1018"/><line x1="1876.1" y1="145" x2="2011.4" y2="1018"/><line x1="1891.3" y1="145" x2="2026.6" y2="1018"/><line x1="1906.5" y1="145" x2="2041.8" y2="1018"/></g><polygon points="575,145 677,787.5 1161,1018 1453,1018 1360,436 739,145" fill="#225437"/><polyline points="575,150 1302,494 1360,436" fill="none" stroke="#4e7a44" stroke-width="1" opacity="0.8"/><line x1="1302" y1="494" x2="1387" y2="1018" stroke="#4e7a44" stroke-width="1" opacity="0.8"/><line x1="617" y1="845" x2="677" y2="787.5" stroke="#3a8a8a" stroke-width="1" opacity="0.7"/><polyline points="575,145 677,787.5 1161,1018" fill="none" stroke="#33e04a" stroke-width="3"/><polyline points="739,145 1360,436 1453,1018" fill="none" stroke="#44d45a" stroke-width="2.5"/><polyline points="991.9,469.8 981.8,404.6 981.8,404.6 981.5,403.4 980.9,402.2 980.2,401.0 979.3,399.8 978.2,398.8 977.1,397.9 976.0,397.2 976.0,397.2 695.5,266.0 695.5,266.0 694.0,265.4 692.5,265.2 691.3,265.3 690.3,265.8 689.6,266.7 689.2,267.8 689.1,269.2 689.3,270.8 689.9,272.5 690.7,274.2 691.9,275.9 693.2,277.5 694.7,278.9 696.2,280.1 697.8,281.0 697.8,281.0 895.3,373.4 895.3,373.4 896.9,374.3 898.5,375.5 900.0,376.9 901.3,378.5 902.4,380.2 903.3,381.9 903.8,383.6 904.1,385.2 904.0,386.6 903.6,387.7 902.9,388.5 901.8,389.0 900.6,389.2 899.2,389.0 897.7,388.4 897.7,388.4 700.2,296.0 700.2,296.0 698.6,295.4 697.2,295.2 695.9,295.3 694.9,295.8 694.1,296.7 693.7,297.9 693.6,299.3 693.9,300.9 694.5,302.6 695.3,304.3 696.5,306.1 697.8,307.7 699.3,309.2 700.9,310.4 702.6,311.3 702.6,311.3 894.1,400.9" fill="none" stroke="#66e070" stroke-width="4.0" stroke-linejoin="round" stroke-linecap="round"/><polyline points="991.9,469.8 981.8,404.6 981.8,404.6 981.5,403.4 980.9,402.2 980.2,401.0 979.3,399.8 978.2,398.8 977.1,397.9 976.0,397.2 976.0,397.2 695.5,266.0 695.5,266.0 694.0,265.4 692.5,265.2 691.3,265.3 690.3,265.8 689.6,266.7 689.2,267.8 689.1,269.2 689.3,270.8 689.9,272.5 690.7,274.2 691.9,275.9 693.2,277.5 694.7,278.9 696.2,280.1 697.8,281.0 697.8,281.0 895.3,373.4 895.3,373.4 896.9,374.3 898.5,375.5 900.0,376.9 901.3,378.5 902.4,380.2 903.3,381.9 903.8,383.6 904.1,385.2 904.0,386.6 903.6,387.7 902.9,388.5 901.8,389.0 900.6,389.2 899.2,389.0 897.7,388.4 897.7,388.4 700.2,296.0 700.2,296.0 698.6,295.4 697.2,295.2 695.9,295.3 694.9,295.8 694.1,296.7 693.7,297.9 693.6,299.3 693.9,300.9 694.5,302.6 695.3,304.3 696.5,306.1 697.8,307.7 699.3,309.2 700.9,310.4 702.6,311.3 702.6,311.3 894.1,400.9" fill="none" stroke="#50b8d0" stroke-width="2.5" stroke-linejoin="round" stroke-linecap="round"/><polyline points="991.9,469.8 981.8,404.6 981.8,404.6 981.5,403.4 980.9,402.2 980.2,401.0 979.3,399.8 978.2,398.8 977.1,397.9 976.0,397.2 976.0,397.2 695.5,266.0 695.5,266.0 694.0,265.4 692.5,265.2 691.3,265.3 690.3,265.8 689.6,266.7 689.2,267.8 689.1,269.2 689.3,270.8 689.9,272.5 690.7,274.2 691.9,275.9 693.2,277.5 694.7,278.9 696.2,280.1 697.8,281.0 697.8,281.0 895.3,373.4 895.3,373.4 896.9,374.3 898.5,375.5 900.0,376.9 901.3,378.5 902.4,380.2 903.3,381.9 903.8,383.6 904.1,385.2 904.0,386.6 903.6,387.7 902.9,388.5 901.8,389.0 900.6,389.2 899.2,389.0 897.7,388.4 897.7,388.4 700.2,296.0 700.2,296.0 698.6,295.4 697.2,295.2 695.9,295.3 694.9,295.8 694.1,296.7 693.7,297.9 693.6,299.3 693.9,300.9 694.5,302.6 695.3,304.3 696.5,306.1 697.8,307.7 699.3,309.2 700.9,310.4 702.6,311.3 702.6,311.3 894.1,400.9" fill="none" stroke="#1c3a66" stroke-width="1.3" stroke-linejoin="round" stroke-linecap="round"/><polyline points="1024.4,564.7 1014.7,502.7 1014.7,502.7 1014.6,501.4 1014.9,500.4 1015.4,499.6 1016.2,499.0 1017.2,498.9 1018.4,499.0 1019.7,499.5 1019.7,499.5 1293.3,627.5 1293.3,627.5 1295.0,628.5 1296.7,629.7 1298.3,631.3 1299.7,633.0 1300.9,634.8 1301.8,636.6 1302.4,638.4 1302.7,640.1 1302.6,641.6 1302.1,642.8 1301.4,643.7 1300.3,644.2 1299.0,644.4 1297.5,644.1 1295.8,643.5 1295.8,643.5 1103.8,553.7 1103.8,553.7 1102.2,553.1 1100.7,552.8 1099.4,553.0 1098.3,553.5 1097.5,554.4 1097.1,555.6 1097.0,557.1 1097.3,558.8 1097.9,560.6 1098.8,562.4 1100.0,564.2 1101.4,565.9 1103.0,567.5 1104.6,568.7 1106.3,569.7 1106.3,569.7 1298.3,659.5 1298.3,659.5 1300.0,660.5 1301.7,661.7 1303.3,663.3 1304.7,665.0 1305.9,666.8 1306.8,668.6 1307.4,670.4 1307.7,672.1 1307.6,673.6 1307.1,674.8 1306.4,675.7 1305.3,676.2 1304.0,676.4 1302.5,676.1 1300.8,675.5 1300.8,675.5 1111.8,587.1" fill="none" stroke="#66e070" stroke-width="4.0" stroke-linejoin="round" stroke-linecap="round"/><polyline points="1024.4,564.7 1014.7,502.7 1014.7,502.7 1014.6,501.4 1014.9,500.4 1015.4,499.6 1016.2,499.0 1017.2,498.9 1018.4,499.0 1019.7,499.5 1019.7,499.5 1293.3,627.5 1293.3,627.5 1295.0,628.5 1296.7,629.7 1298.3,631.3 1299.7,633.0 1300.9,634.8 1301.8,636.6 1302.4,638.4 1302.7,640.1 1302.6,641.6 1302.1,642.8 1301.4,643.7 1300.3,644.2 1299.0,644.4 1297.5,644.1 1295.8,643.5 1295.8,643.5 1103.8,553.7 1103.8,553.7 1102.2,553.1 1100.7,552.8 1099.4,553.0 1098.3,553.5 1097.5,554.4 1097.1,555.6 1097.0,557.1 1097.3,558.8 1097.9,560.6 1098.8,562.4 1100.0,564.2 1101.4,565.9 1103.0,567.5 1104.6,568.7 1106.3,569.7 1106.3,569.7 1298.3,659.5 1298.3,659.5 1300.0,660.5 1301.7,661.7 1303.3,663.3 1304.7,665.0 1305.9,666.8 1306.8,668.6 1307.4,670.4 1307.7,672.1 1307.6,673.6 1307.1,674.8 1306.4,675.7 1305.3,676.2 1304.0,676.4 1302.5,676.1 1300.8,675.5 1300.8,675.5 1111.8,587.1" fill="none" stroke="#50b8d0" stroke-width="2.5" stroke-linejoin="round" stroke-linecap="round"/><polyline points="1024.4,564.7 1014.7,502.7 1014.7,502.7 1014.6,501.4 1014.9,500.4 1015.4,499.6 1016.2,499.0 1017.2,498.9 1018.4,499.0 1019.7,499.5 1019.7,499.5 1293.3,627.5 1293.3,627.5 1295.0,628.5 1296.7,629.7 1298.3,631.3 1299.7,633.0 1300.9,634.8 1301.8,636.6 1302.4,638.4 1302.7,640.1 1302.6,641.6 1302.1,642.8 1301.4,643.7 1300.3,644.2 1299.0,644.4 1297.5,644.1 1295.8,643.5 1295.8,643.5 1103.8,553.7 1103.8,553.7 1102.2,553.1 1100.7,552.8 1099.4,553.0 1098.3,553.5 1097.5,554.4 1097.1,555.6 1097.0,557.1 1097.3,558.8 1097.9,560.6 1098.8,562.4 1100.0,564.2 1101.4,565.9 1103.0,567.5 1104.6,568.7 1106.3,569.7 1106.3,569.7 1298.3,659.5 1298.3,659.5 1300.0,660.5 1301.7,661.7 1303.3,663.3 1304.7,665.0 1305.9,666.8 1306.8,668.6 1307.4,670.4 1307.7,672.1 1307.6,673.6 1307.1,674.8 1306.4,675.7 1305.3,676.2 1304.0,676.4 1302.5,676.1 1300.8,675.5 1300.8,675.5 1111.8,587.1" fill="none" stroke="#1c3a66" stroke-width="1.3" stroke-linejoin="round" stroke-linecap="round"/><polyline points="1015.1,629.9 1007.6,582.4 1007.6,582.4 1007.3,580.9 1006.6,579.5 1005.7,578.0 1004.7,576.6 1003.4,575.4 1002.1,574.3 1000.7,573.5 1000.7,573.5 734.2,448.8 734.2,448.8 732.7,448.3 731.3,448.0 730.0,448.2 729.0,448.7 728.3,449.5 727.9,450.7 727.8,452.0 728.0,453.6 728.6,455.3 729.5,457.0 730.6,458.7 731.9,460.3 733.4,461.7 735.0,462.9 736.5,463.8 736.5,463.8 922.0,550.6 922.0,550.6 923.6,551.5 925.2,552.7 926.7,554.1 928.0,555.7 929.1,557.4 930.0,559.2 930.6,560.8 930.8,562.4 930.7,563.8 930.3,564.9 929.6,565.8 928.6,566.3 927.3,566.4 925.9,566.2 924.4,565.6 924.4,565.6 738.9,478.8 738.9,478.8 737.4,478.3 735.9,478.0 734.7,478.2 733.7,478.7 733.0,479.5 732.6,480.7 732.5,482.0 732.7,483.6 733.3,485.3 734.1,487.0 735.3,488.7 736.6,490.3 738.1,491.7 739.6,492.9 741.2,493.8 741.2,493.8 935.7,584.8" fill="none" stroke="#34e262" stroke-width="5.6" stroke-linejoin="round" stroke-linecap="round"/><polyline points="1015.1,629.9 1007.6,582.4 1007.6,582.4 1007.3,580.9 1006.6,579.5 1005.7,578.0 1004.7,576.6 1003.4,575.4 1002.1,574.3 1000.7,573.5 1000.7,573.5 734.2,448.8 734.2,448.8 732.7,448.3 731.3,448.0 730.0,448.2 729.0,448.7 728.3,449.5 727.9,450.7 727.8,452.0 728.0,453.6 728.6,455.3 729.5,457.0 730.6,458.7 731.9,460.3 733.4,461.7 735.0,462.9 736.5,463.8 736.5,463.8 922.0,550.6 922.0,550.6 923.6,551.5 925.2,552.7 926.7,554.1 928.0,555.7 929.1,557.4 930.0,559.2 930.6,560.8 930.8,562.4 930.7,563.8 930.3,564.9 929.6,565.8 928.6,566.3 927.3,566.4 925.9,566.2 924.4,565.6 924.4,565.6 738.9,478.8 738.9,478.8 737.4,478.3 735.9,478.0 734.7,478.2 733.7,478.7 733.0,479.5 732.6,480.7 732.5,482.0 732.7,483.6 733.3,485.3 734.1,487.0 735.3,488.7 736.6,490.3 738.1,491.7 739.6,492.9 741.2,493.8 741.2,493.8 935.7,584.8" fill="none" stroke="#42dca2" stroke-width="3.8" stroke-linejoin="round" stroke-linecap="round"/><polyline points="1015.1,629.9 1007.6,582.4 1007.6,582.4 1007.3,580.9 1006.6,579.5 1005.7,578.0 1004.7,576.6 1003.4,575.4 1002.1,574.3 1000.7,573.5 1000.7,573.5 734.2,448.8 734.2,448.8 732.7,448.3 731.3,448.0 730.0,448.2 729.0,448.7 728.3,449.5 727.9,450.7 727.8,452.0 728.0,453.6 728.6,455.3 729.5,457.0 730.6,458.7 731.9,460.3 733.4,461.7 735.0,462.9 736.5,463.8 736.5,463.8 922.0,550.6 922.0,550.6 923.6,551.5 925.2,552.7 926.7,554.1 928.0,555.7 929.1,557.4 930.0,559.2 930.6,560.8 930.8,562.4 930.7,563.8 930.3,564.9 929.6,565.8 928.6,566.3 927.3,566.4 925.9,566.2 924.4,565.6 924.4,565.6 738.9,478.8 738.9,478.8 737.4,478.3 735.9,478.0 734.7,478.2 733.7,478.7 733.0,479.5 732.6,480.7 732.5,482.0 732.7,483.6 733.3,485.3 734.1,487.0 735.3,488.7 736.6,490.3 738.1,491.7 739.6,492.9 741.2,493.8 741.2,493.8 935.7,584.8" fill="none" stroke="#3aa888" stroke-width="0.7" stroke-linejoin="round" stroke-linecap="round"/><polyline points="1038.2,819.6 1027.9,753.6 1027.9,753.6 1027.1,750.8 1025.9,747.8 1024.1,744.9 1021.9,742.1 1019.4,739.6 1016.7,737.5 1014.0,736.0 1014.0,736.0 783.0,627.9 783.0,627.9 779.8,626.7 776.9,626.2 774.3,626.5 772.3,627.6 770.8,629.3 769.9,631.7 769.7,634.5 770.2,637.8 771.4,641.2 773.2,644.8 775.5,648.3 778.3,651.6 781.3,654.6 784.6,657.0 787.8,658.9 787.8,658.9 933.8,727.2 933.8,727.2 937.2,729.1 940.6,731.6 943.7,734.6 946.5,738.0 948.9,741.7 950.8,745.4 952.0,749.0 952.5,752.3 952.3,755.2 951.4,757.7 949.9,759.5 947.7,760.5 945.1,760.8 942.1,760.4 938.8,759.2 938.8,759.2 792.8,690.9 792.8,690.9 789.7,689.7 786.7,689.2 784.2,689.5 782.1,690.6 780.6,692.3 779.7,694.7 779.6,697.5 780.1,700.8 781.2,704.2 783.0,707.8 785.3,711.3 788.1,714.6 791.1,717.6 794.4,720.0 797.7,721.9 797.7,721.9 937.7,787.4" fill="none" stroke="#36e65a" stroke-width="6.6" stroke-linejoin="round" stroke-linecap="round"/><polyline points="1038.2,819.6 1027.9,753.6 1027.9,753.6 1027.1,750.8 1025.9,747.8 1024.1,744.9 1021.9,742.1 1019.4,739.6 1016.7,737.5 1014.0,736.0 1014.0,736.0 783.0,627.9 783.0,627.9 779.8,626.7 776.9,626.2 774.3,626.5 772.3,627.6 770.8,629.3 769.9,631.7 769.7,634.5 770.2,637.8 771.4,641.2 773.2,644.8 775.5,648.3 778.3,651.6 781.3,654.6 784.6,657.0 787.8,658.9 787.8,658.9 933.8,727.2 933.8,727.2 937.2,729.1 940.6,731.6 943.7,734.6 946.5,738.0 948.9,741.7 950.8,745.4 952.0,749.0 952.5,752.3 952.3,755.2 951.4,757.7 949.9,759.5 947.7,760.5 945.1,760.8 942.1,760.4 938.8,759.2 938.8,759.2 792.8,690.9 792.8,690.9 789.7,689.7 786.7,689.2 784.2,689.5 782.1,690.6 780.6,692.3 779.7,694.7 779.6,697.5 780.1,700.8 781.2,704.2 783.0,707.8 785.3,711.3 788.1,714.6 791.1,717.6 794.4,720.0 797.7,721.9 797.7,721.9 937.7,787.4" fill="none" stroke="#40c8e0" stroke-width="4.6" stroke-linejoin="round" stroke-linecap="round"/><polyline points="1038.2,819.6 1027.9,753.6 1027.9,753.6 1027.1,750.8 1025.9,747.8 1024.1,744.9 1021.9,742.1 1019.4,739.6 1016.7,737.5 1014.0,736.0 1014.0,736.0 783.0,627.9 783.0,627.9 779.8,626.7 776.9,626.2 774.3,626.5 772.3,627.6 770.8,629.3 769.9,631.7 769.7,634.5 770.2,637.8 771.4,641.2 773.2,644.8 775.5,648.3 778.3,651.6 781.3,654.6 784.6,657.0 787.8,658.9 787.8,658.9 933.8,727.2 933.8,727.2 937.2,729.1 940.6,731.6 943.7,734.6 946.5,738.0 948.9,741.7 950.8,745.4 952.0,749.0 952.5,752.3 952.3,755.2 951.4,757.7 949.9,759.5 947.7,760.5 945.1,760.8 942.1,760.4 938.8,759.2 938.8,759.2 792.8,690.9 792.8,690.9 789.7,689.7 786.7,689.2 784.2,689.5 782.1,690.6 780.6,692.3 779.7,694.7 779.6,697.5 780.1,700.8 781.2,704.2 783.0,707.8 785.3,711.3 788.1,714.6 791.1,717.6 794.4,720.0 797.7,721.9 797.7,721.9 937.7,787.4" fill="none" stroke="#0a1ee6" stroke-width="3.0" stroke-linejoin="round" stroke-linecap="round"/><polyline points="1057.7,749.0 1047.4,682.5 1047.4,682.5 1047.3,680.8 1047.6,679.4 1048.3,678.3 1049.4,677.7 1050.8,677.4 1052.4,677.6 1054.1,678.3 1054.1,678.3 1298.6,792.7 1298.6,792.7 1301.5,794.3 1304.4,796.5 1307.1,799.1 1309.5,802.0 1311.6,805.1 1313.2,808.3 1314.2,811.4 1314.7,814.3 1314.5,816.8 1313.7,818.9 1312.4,820.4 1310.6,821.3 1308.3,821.6 1305.7,821.2 1302.9,820.2 1302.9,820.2 1146.9,747.2 1146.9,747.2 1143.7,746.0 1140.8,745.6 1138.3,745.9 1136.2,746.9 1134.7,748.6 1133.8,751.0 1133.7,753.8 1134.2,757.1 1135.3,760.6 1137.1,764.1 1139.4,767.7 1142.2,771.0 1145.2,773.9 1148.5,776.3 1151.7,778.2 1151.7,778.2 1307.7,851.2 1307.7,851.2 1310.8,852.9 1313.8,855.2 1316.7,857.9 1319.3,861.0 1321.4,864.3 1323.1,867.7 1324.2,870.9 1324.7,874.0 1324.5,876.6 1323.7,878.8 1322.3,880.4 1320.4,881.4 1318.0,881.7 1315.2,881.3 1312.3,880.2 1312.3,880.2 1164.3,810.9" fill="none" stroke="#36e65a" stroke-width="6.0" stroke-linejoin="round" stroke-linecap="round"/><polyline points="1057.7,749.0 1047.4,682.5 1047.4,682.5 1047.3,680.8 1047.6,679.4 1048.3,678.3 1049.4,677.7 1050.8,677.4 1052.4,677.6 1054.1,678.3 1054.1,678.3 1298.6,792.7 1298.6,792.7 1301.5,794.3 1304.4,796.5 1307.1,799.1 1309.5,802.0 1311.6,805.1 1313.2,808.3 1314.2,811.4 1314.7,814.3 1314.5,816.8 1313.7,818.9 1312.4,820.4 1310.6,821.3 1308.3,821.6 1305.7,821.2 1302.9,820.2 1302.9,820.2 1146.9,747.2 1146.9,747.2 1143.7,746.0 1140.8,745.6 1138.3,745.9 1136.2,746.9 1134.7,748.6 1133.8,751.0 1133.7,753.8 1134.2,757.1 1135.3,760.6 1137.1,764.1 1139.4,767.7 1142.2,771.0 1145.2,773.9 1148.5,776.3 1151.7,778.2 1151.7,778.2 1307.7,851.2 1307.7,851.2 1310.8,852.9 1313.8,855.2 1316.7,857.9 1319.3,861.0 1321.4,864.3 1323.1,867.7 1324.2,870.9 1324.7,874.0 1324.5,876.6 1323.7,878.8 1322.3,880.4 1320.4,881.4 1318.0,881.7 1315.2,881.3 1312.3,880.2 1312.3,880.2 1164.3,810.9" fill="none" stroke="#48cce0" stroke-width="4.0" stroke-linejoin="round" stroke-linecap="round"/><polyline points="1057.7,749.0 1047.4,682.5 1047.4,682.5 1047.3,680.8 1047.6,679.4 1048.3,678.3 1049.4,677.7 1050.8,677.4 1052.4,677.6 1054.1,678.3 1054.1,678.3 1298.6,792.7 1298.6,792.7 1301.5,794.3 1304.4,796.5 1307.1,799.1 1309.5,802.0 1311.6,805.1 1313.2,808.3 1314.2,811.4 1314.7,814.3 1314.5,816.8 1313.7,818.9 1312.4,820.4 1310.6,821.3 1308.3,821.6 1305.7,821.2 1302.9,820.2 1302.9,820.2 1146.9,747.2 1146.9,747.2 1143.7,746.0 1140.8,745.6 1138.3,745.9 1136.2,746.9 1134.7,748.6 1133.8,751.0 1133.7,753.8 1134.2,757.1 1135.3,760.6 1137.1,764.1 1139.4,767.7 1142.2,771.0 1145.2,773.9 1148.5,776.3 1151.7,778.2 1151.7,778.2 1307.7,851.2 1307.7,851.2 1310.8,852.9 1313.8,855.2 1316.7,857.9 1319.3,861.0 1321.4,864.3 1323.1,867.7 1324.2,870.9 1324.7,874.0 1324.5,876.6 1323.7,878.8 1322.3,880.4 1320.4,881.4 1318.0,881.7 1315.2,881.3 1312.3,880.2 1312.3,880.2 1164.3,810.9" fill="none" stroke="#0a1ee6" stroke-width="2.0" stroke-linejoin="round" stroke-linecap="round"/><polygon points="927.7,247.5 1007.5,284 1016,336.7 991.6,378.9 980.3,375 935.3,300" fill="#4a7c7a" stroke="#3ae45a" stroke-width="2.5" stroke-linejoin="round"/><polygon points="949.3,272.8 991.6,291.6 997.2,328.2 989.7,378.9 984,377 954,307.6" fill="#0808e8"/><polygon points="1054.6,849.2 1064.3,853.1 1109.1,929.1 1117,981.8 1039,946.7 1030.2,892.1" fill="#4a7c7a" stroke="#3ae45a" stroke-width="2.5" stroke-linejoin="round"/><polygon points="1056.5,851.2 1063,855 1089.6,919.4 1096.5,958.4 1056.5,940.8 1049.7,898" fill="#0808e8"/><polygon points="1055.5,940 1096.5,958 1097.5,973 1058.5,955" fill="#0a2a2c"/><polyline points="985.8,374.2 1061.2,857.2" fill="none" stroke="#3ae45a" stroke-width="13.5" stroke-linecap="butt"/><polyline points="985.8,374.2 1061.2,857.2" fill="none" stroke="#58c0d8" stroke-width="9.5" stroke-linecap="butt"/><polyline points="985.8,374.2 1061.2,857.2" fill="none" stroke="#0808e8" stroke-width="6" stroke-linecap="butt"/><polyline points="1024,613 1061,856" fill="none" stroke="#c040c0" stroke-width="1" stroke-dasharray="3 3"/><polyline points="1061,856 1078,968" fill="none" stroke="#e04040" stroke-width="1.2" stroke-dasharray="4 3"/><line x1="1000" y1="940.8" x2="1161" y2="1018" stroke="#6ad040" stroke-width="2"/><path d="M1072 969 Q1081 962 1090 972 L1086 990 L1077 990 Z" fill="#ff1a1a"/><rect x="1672" y="958" width="168" height="60" fill="#fff" opacity="0.3"/><text x="1684" y="973" font-family="Liberation Sans" font-size="11" fill="#dcdce0">English (United States)</text><text x="1684" y="989" font-family="Liberation Sans" font-size="11" fill="#dcdce0">US keyboard</text><line x1="1024.7" y1="613" x2="1253.4" y2="386" stroke="#5a86c0" stroke-width="1.5"/><line x1="1253.4" y1="386" x2="1458" y2="183" stroke="#3a5a9a" stroke-width="1.6"/><path d="M1476.6 167.5 L1450 179 Q1449 187 1455 191 L1465 193.4 Z" fill="#3a6ae0"/><path d="M1475 169 L1455 188" stroke="#6a9af8" stroke-width="2"/><text x="1477.5" y="166.5" font-family="Liberation Sans" font-size="11" font-weight="bold" fill="#3a4a8a">Z</text><line x1="1024.7" y1="613" x2="1800" y2="986" stroke="#1a7a1a" stroke-width="1.8"/><path d="M1829 996 L1806 974 Q1796 984 1800 993 Z" fill="#28a028"/><text x="1829" y="997" font-family="Liberation Sans" font-size="10" font-weight="bold" fill="#1a6a1a">Y</text><rect x="1853" y="966" width="2" height="52" fill="#9a9aa0"/><rect x="738.5" y="990.5" width="316" height="6.5" fill="#fff" stroke="#111" stroke-width="1"/><rect x="1055" y="990" width="317" height="7.5" fill="#000"/><text x="735" y="1013" font-family="Liberation Sans" font-size="11.5" fill="#111">0</text><text x="1046" y="1013" font-family="Liberation Sans" font-size="11.5" fill="#111">1.5</text><text x="1368" y="1013" font-family="Liberation Sans" font-size="11.5" fill="#111">3 (mm)</text><rect x="193" y="145" width="148" height="263" fill="#fff"/><rect x="199.5" y="153.5" width="135" height="260" fill="#fff" stroke="#111" stroke-width="1.2"/><text x="207" y="171" font-family="Liberation Mono" font-weight="bold" font-size="12.5" fill="#111" textLength="103" lengthAdjust="spacingAndGlyphs">E Field [V/m]</text><rect x="207" y="203.0" width="35" height="17.8" fill="#ff0000"/><rect x="207" y="220.6" width="35" height="17.8" fill="#ff4a00"/><rect x="207" y="238.2" width="35" height="17.8" fill="#ff8a00"/><rect x="207" y="255.8" width="35" height="17.8" fill="#ffd800"/><rect x="207" y="273.4" width="35" height="17.8" fill="#e4ff00"/><rect x="207" y="291.0" width="35" height="17.8" fill="#9cff00"/><rect x="207" y="308.6" width="35" height="17.8" fill="#5cff00"/><rect x="207" y="326.2" width="35" height="17.8" fill="#00f000"/><rect x="207" y="343.8" width="35" height="17.8" fill="#00ff5a"/><rect x="207" y="361.4" width="35" height="17.8" fill="#00f0a0"/><rect x="207" y="379.0" width="35" height="17.8" fill="#00ffe0"/><rect x="207" y="396.6" width="35" height="17.8" fill="#00d8ff"/><text x="330" y="207.5" text-anchor="end" font-family="Liberation Mono" font-size="11.5" fill="#111" textLength="70" lengthAdjust="spacingAndGlyphs">3.2106E+12</text><text x="330" y="225.1" text-anchor="end" font-family="Liberation Mono" font-size="11.5" fill="#111" textLength="70" lengthAdjust="spacingAndGlyphs">2.9966E+12</text><text x="330" y="242.7" text-anchor="end" font-family="Liberation Mono" font-size="11.5" fill="#111" textLength="70" lengthAdjust="spacingAndGlyphs">2.7825E+12</text><text x="330" y="260.3" text-anchor="end" font-family="Liberation Mono" font-size="11.5" fill="#111" textLength="70" lengthAdjust="spacingAndGlyphs">2.5685E+12</text><text x="330" y="277.9" text-anchor="end" font-family="Liberation Mono" font-size="11.5" fill="#111" textLength="70" lengthAdjust="spacingAndGlyphs">2.3544E+12</text><text x="330" y="295.5" text-anchor="end" font-family="Liberation Mono" font-size="11.5" fill="#111" textLength="70" lengthAdjust="spacingAndGlyphs">2.1404E+12</text><text x="330" y="313.1" text-anchor="end" font-family="Liberation Mono" font-size="11.5" fill="#111" textLength="70" lengthAdjust="spacingAndGlyphs">1.9264E+12</text><text x="330" y="330.7" text-anchor="end" font-family="Liberation Mono" font-size="11.5" fill="#111" textLength="70" lengthAdjust="spacingAndGlyphs">1.7123E+12</text><text x="330" y="348.3" text-anchor="end" font-family="Liberation Mono" font-size="11.5" fill="#111" textLength="70" lengthAdjust="spacingAndGlyphs">1.4983E+12</text><text x="330" y="365.9" text-anchor="end" font-family="Liberation Mono" font-size="11.5" fill="#111" textLength="70" lengthAdjust="spacingAndGlyphs">1.2842E+12</text><text x="330" y="383.5" text-anchor="end" font-family="Liberation Mono" font-size="11.5" fill="#111" textLength="70" lengthAdjust="spacingAndGlyphs">1.0702E+12</text><text x="330" y="401.1" text-anchor="end" font-family="Liberation Mono" font-size="11.5" fill="#111" textLength="70" lengthAdjust="spacingAndGlyphs">8.5616E+11</text><rect x="359" y="318" width="136" height="29" fill="#808080"/><rect x="355" y="313.5" width="136" height="28.5" fill="#e3e3e5"/><text x="362.5" y="334.5" font-family="Liberation Sans" font-size="17.3" fill="#1212a0" stroke="#1212a0" stroke-width="0.45" textLength="120" lengthAdjust="spacingAndGlyphs">Phase = 10deg</text></svg>
<svg class="a" style="left:0;top:0" width="1918" height="1026" viewBox="0 0 1918 1026"><rect x="838.5" y="487.5" width="17" height="22" fill="none" stroke="#111" stroke-width="1"/><g stroke="#111" stroke-width="1.1"><line x1="549" y1="411" x2="855.5" y2="487.5"/><line x1="549" y1="460" x2="838.5" y2="487.5"/><line x1="549" y1="610" x2="838.5" y2="509.5"/><line x1="545" y1="785" x2="855.5" y2="509.5"/></g><svg x="65" y="408" width="484" height="373" viewBox="65 408 484 373"><rect x="65" y="408" width="484" height="373" fill="#c1cab5"/><line x1="65" y1="-108.3" x2="549" y2="90.1" stroke="#a8ae9c" stroke-width="0.8" stroke-dasharray="2 3"/><line x1="65" y1="-93.8" x2="549" y2="104.6" stroke="#a8ae9c" stroke-width="0.8" stroke-dasharray="2 3"/><line x1="65" y1="-79.3" x2="549" y2="119.1" stroke="#a8ae9c" stroke-width="0.8" stroke-dasharray="2 3"/><line x1="65" y1="-64.8" x2="549" y2="133.6" stroke="#a8ae9c" stroke-width="0.8" stroke-dasharray="2 3"/><line x1="65" y1="-50.4" x2="549" y2="148.1" stroke="#a8ae9c" stroke-width="0.8" stroke-dasharray="2 3"/><line x1="65" y1="-35.9" x2="549" y2="162.6" stroke="#a8ae9c" stroke-width="0.8" stroke-dasharray="2 3"/><line x1="65" y1="-21.4" x2="549" y2="177.1" stroke="#a8ae9c" stroke-width="0.8" stroke-dasharray="2 3"/><line x1="65" y1="-6.9" x2="549" y2="191.6" stroke="#a8ae9c" stroke-width="0.8" stroke-dasharray="2 3"/><line x1="65" y1="7.6" x2="549" y2="206.1" stroke="#a8ae9c" stroke-width="0.8" stroke-dasharray="2 3"/><line x1="65" y1="22.1" x2="549" y2="220.6" stroke="#a8ae9c" stroke-width="0.8" stroke-dasharray="2 3"/><line x1="65" y1="36.6" x2="549" y2="235.1" stroke="#a8ae9c" stroke-width="0.8" stroke-dasharray="2 3"/><line x1="65" y1="51.1" x2="549" y2="249.6" stroke="#a8ae9c" stroke-width="0.8" stroke-dasharray="2 3"/><line x1="65" y1="65.7" x2="549" y2="264.1" stroke="#a8ae9c" stroke-width="0.8" stroke-dasharray="2 3"/><line x1="65" y1="80.2" x2="549" y2="278.6" stroke="#a8ae9c" stroke-width="0.8" stroke-dasharray="2 3"/><line x1="65" y1="94.7" x2="549" y2="293.1" stroke="#a8ae9c" stroke-width="0.8" stroke-dasharray="2 3"/><line x1="65" y1="109.2" x2="549" y2="307.6" stroke="#a8ae9c" stroke-width="0.8" stroke-dasharray="2 3"/><line x1="65" y1="123.7" x2="549" y2="322.1" stroke="#a8ae9c" stroke-width="0.8" stroke-dasharray="2 3"/><line x1="65" y1="138.2" x2="549" y2="336.6" stroke="#a8ae9c" stroke-width="0.8" stroke-dasharray="2 3"/><line x1="65" y1="152.7" x2="549" y2="351.1" stroke="#a8ae9c" stroke-width="0.8" stroke-dasharray="2 3"/><line x1="65" y1="167.2" x2="549" y2="365.6" stroke="#a8ae9c" stroke-width="0.8" stroke-dasharray="2 3"/><line x1="65" y1="181.7" x2="549" y2="380.1" stroke="#a8ae9c" stroke-width="0.8" stroke-dasharray="2 3"/><line x1="65" y1="196.2" x2="549" y2="394.6" stroke="#a8ae9c" stroke-width="0.8" stroke-dasharray="2 3"/><line x1="65" y1="210.7" x2="549" y2="409.1" stroke="#a8ae9c" stroke-width="0.8" stroke-dasharray="2 3"/><line x1="65" y1="225.2" x2="549" y2="423.6" stroke="#a8ae9c" stroke-width="0.8" stroke-dasharray="2 3"/><line x1="65" y1="239.7" x2="549" y2="438.1" stroke="#a8ae9c" stroke-width="0.8" stroke-dasharray="2 3"/><line x1="65" y1="254.2" x2="549" y2="452.6" stroke="#a8ae9c" stroke-width="0.8" stroke-dasharray="2 3"/><line x1="65" y1="268.6" x2="549" y2="467.1" stroke="#a8ae9c" stroke-width="0.8" stroke-dasharray="2 3"/><line x1="65" y1="283.1" x2="549" y2="481.6" stroke="#a8ae9c" stroke-width="0.8" stroke-dasharray="2 3"/><line x1="65" y1="297.6" x2="549" y2="496.1" stroke="#a8ae9c" stroke-width="0.8" stroke-dasharray="2 3"/><line x1="65" y1="312.1" x2="549" y2="510.6" stroke="#a8ae9c" stroke-width="0.8" stroke-dasharray="2 3"/><line x1="65" y1="326.6" x2="549" y2="525.1" stroke="#a8ae9c" stroke-width="0.8" stroke-dasharray="2 3"/><line x1="65" y1="341.1" x2="549" y2="539.6" stroke="#a8ae9c" stroke-width="0.8" stroke-dasharray="2 3"/><line x1="65" y1="355.6" x2="549" y2="554.1" stroke="#a8ae9c" stroke-width="0.8" stroke-dasharray="2 3"/><line x1="65" y1="370.1" x2="549" y2="568.6" stroke="#a8ae9c" stroke-width="0.8" stroke-dasharray="2 3"/><line x1="65" y1="384.6" x2="549" y2="583.1" stroke="#a8ae9c" stroke-width="0.8" stroke-dasharray="2 3"/><line x1="65" y1="399.1" x2="549" y2="597.6" stroke="#a8ae9c" stroke-width="0.8" stroke-dasharray="2 3"/><line x1="65" y1="413.6" x2="549" y2="612.1" stroke="#a8ae9c" stroke-width="0.8" stroke-dasharray="2 3"/><line x1="65" y1="428.1" x2="549" y2="626.6" stroke="#a8ae9c" stroke-width="0.8" stroke-dasharray="2 3"/><line x1="65" y1="442.6" x2="549" y2="641.1" stroke="#a8ae9c" stroke-width="0.8" stroke-dasharray="2 3"/><line x1="65" y1="457.1" x2="549" y2="655.6" stroke="#a8ae9c" stroke-width="0.8" stroke-dasharray="2 3"/><line x1="65" y1="471.6" x2="549" y2="670.1" stroke="#a8ae9c" stroke-width="0.8" stroke-dasharray="2 3"/><line x1="65" y1="486.1" x2="549" y2="684.6" stroke="#a8ae9c" stroke-width="0.8" stroke-dasharray="2 3"/><line x1="65" y1="500.6" x2="549" y2="699.1" stroke="#a8ae9c" stroke-width="0.8" stroke-dasharray="2 3"/><line x1="65" y1="515.1" x2="549" y2="713.6" stroke="#a8ae9c" stroke-width="0.8" stroke-dasharray="2 3"/><line x1="65" y1="529.6" x2="549" y2="728.1" stroke="#a8ae9c" stroke-width="0.8" stroke-dasharray="2 3"/><line x1="65" y1="544.1" x2="549" y2="742.6" stroke="#a8ae9c" stroke-width="0.8" stroke-dasharray="2 3"/><line x1="65" y1="558.6" x2="549" y2="757.1" stroke="#a8ae9c" stroke-width="0.8" stroke-dasharray="2 3"/><line x1="65" y1="573.1" x2="549" y2="771.6" stroke="#a8ae9c" stroke-width="0.8" stroke-dasharray="2 3"/><line x1="65" y1="587.6" x2="549" y2="786.1" stroke="#a8ae9c" stroke-width="0.8" stroke-dasharray="2 3"/><line x1="65" y1="602.1" x2="549" y2="800.6" stroke="#a8ae9c" stroke-width="0.8" stroke-dasharray="2 3"/><line x1="65" y1="616.6" x2="549" y2="815.1" stroke="#a8ae9c" stroke-width="0.8" stroke-dasharray="2 3"/><line x1="65" y1="631.1" x2="549" y2="829.6" stroke="#a8ae9c" stroke-width="0.8" stroke-dasharray="2 3"/><line x1="65" y1="645.6" x2="549" y2="844.1" stroke="#a8ae9c" stroke-width="0.8" stroke-dasharray="2 3"/><line x1="65" y1="660.1" x2="549" y2="858.6" stroke="#a8ae9c" stroke-width="0.8" stroke-dasharray="2 3"/><line x1="65" y1="674.6" x2="549" y2="873.1" stroke="#a8ae9c" stroke-width="0.8" stroke-dasharray="2 3"/><line x1="65" y1="689.1" x2="549" y2="887.6" stroke="#a8ae9c" stroke-width="0.8" stroke-dasharray="2 3"/><line x1="65" y1="703.6" x2="549" y2="902.1" stroke="#a8ae9c" stroke-width="0.8" stroke-dasharray="2 3"/><line x1="65" y1="718.1" x2="549" y2="916.6" stroke="#a8ae9c" stroke-width="0.8" stroke-dasharray="2 3"/><line x1="65" y1="732.6" x2="549" y2="931.1" stroke="#a8ae9c" stroke-width="0.8" stroke-dasharray="2 3"/><line x1="65" y1="747.1" x2="549" y2="945.6" stroke="#a8ae9c" stroke-width="0.8" stroke-dasharray="2 3"/><line x1="65" y1="761.6" x2="549" y2="960.1" stroke="#a8ae9c" stroke-width="0.8" stroke-dasharray="2 3"/><line x1="65" y1="776.1" x2="549" y2="974.6" stroke="#a8ae9c" stroke-width="0.8" stroke-dasharray="2 3"/><line x1="65" y1="790.6" x2="549" y2="989.1" stroke="#a8ae9c" stroke-width="0.8" stroke-dasharray="2 3"/><line x1="65" y1="805.1" x2="549" y2="1003.6" stroke="#a8ae9c" stroke-width="0.8" stroke-dasharray="2 3"/><line x1="65" y1="819.6" x2="549" y2="1018.1" stroke="#a8ae9c" stroke-width="0.8" stroke-dasharray="2 3"/><line x1="65" y1="834.1" x2="549" y2="1032.6" stroke="#a8ae9c" stroke-width="0.8" stroke-dasharray="2 3"/><line x1="65" y1="848.6" x2="549" y2="1047.1" stroke="#a8ae9c" stroke-width="0.8" stroke-dasharray="2 3"/><line x1="65" y1="863.1" x2="549" y2="1061.6" stroke="#a8ae9c" stroke-width="0.8" stroke-dasharray="2 3"/><line x1="65" y1="877.6" x2="549" y2="1076.1" stroke="#a8ae9c" stroke-width="0.8" stroke-dasharray="2 3"/><line x1="65" y1="892.1" x2="549" y2="1090.6" stroke="#a8ae9c" stroke-width="0.8" stroke-dasharray="2 3"/><line x1="-21.0" y1="408" x2="23.7" y2="781" stroke="#b0b6a4" stroke-width="0.8" stroke-dasharray="3 5"/><line x1="1.0" y1="408" x2="45.7" y2="781" stroke="#b0b6a4" stroke-width="0.8" stroke-dasharray="3 5"/><line x1="23.0" y1="408" x2="67.7" y2="781" stroke="#b0b6a4" stroke-width="0.8" stroke-dasharray="3 5"/><line x1="45.0" y1="408" x2="89.7" y2="781" stroke="#b0b6a4" stroke-width="0.8" stroke-dasharray="3 5"/><line x1="67.0" y1="408" x2="111.7" y2="781" stroke="#b0b6a4" stroke-width="0.8" stroke-dasharray="3 5"/><line x1="89.0" y1="408" x2="133.7" y2="781" stroke="#b0b6a4" stroke-width="0.8" stroke-dasharray="3 5"/><line x1="111.0" y1="408" x2="155.7" y2="781" stroke="#b0b6a4" stroke-width="0.8" stroke-dasharray="3 5"/><line x1="133.0" y1="408" x2="177.7" y2="781" stroke="#b0b6a4" stroke-width="0.8" stroke-dasharray="3 5"/><line x1="155.0" y1="408" x2="199.7" y2="781" stroke="#b0b6a4" stroke-width="0.8" stroke-dasharray="3 5"/><line x1="177.0" y1="408" x2="221.7" y2="781" stroke="#b0b6a4" stroke-width="0.8" stroke-dasharray="3 5"/><line x1="199.0" y1="408" x2="243.7" y2="781" stroke="#b0b6a4" stroke-width="0.8" stroke-dasharray="3 5"/><line x1="221.0" y1="408" x2="265.7" y2="781" stroke="#b0b6a4" stroke-width="0.8" stroke-dasharray="3 5"/><line x1="243.0" y1="408" x2="287.7" y2="781" stroke="#b0b6a4" stroke-width="0.8" stroke-dasharray="3 5"/><line x1="265.0" y1="408" x2="309.7" y2="781" stroke="#b0b6a4" stroke-width="0.8" stroke-dasharray="3 5"/><line x1="287.0" y1="408" x2="331.7" y2="781" stroke="#b0b6a4" stroke-width="0.8" stroke-dasharray="3 5"/><line x1="309.0" y1="408" x2="353.7" y2="781" stroke="#b0b6a4" stroke-width="0.8" stroke-dasharray="3 5"/><line x1="331.0" y1="408" x2="375.7" y2="781" stroke="#b0b6a4" stroke-width="0.8" stroke-dasharray="3 5"/><line x1="353.0" y1="408" x2="397.7" y2="781" stroke="#b0b6a4" stroke-width="0.8" stroke-dasharray="3 5"/><line x1="375.0" y1="408" x2="419.7" y2="781" stroke="#b0b6a4" stroke-width="0.8" stroke-dasharray="3 5"/><line x1="397.0" y1="408" x2="441.7" y2="781" stroke="#b0b6a4" stroke-width="0.8" stroke-dasharray="3 5"/><line x1="419.0" y1="408" x2="463.7" y2="781" stroke="#b0b6a4" stroke-width="0.8" stroke-dasharray="3 5"/><line x1="441.0" y1="408" x2="485.7" y2="781" stroke="#b0b6a4" stroke-width="0.8" stroke-dasharray="3 5"/><line x1="463.0" y1="408" x2="507.7" y2="781" stroke="#b0b6a4" stroke-width="0.8" stroke-dasharray="3 5"/><line x1="485.0" y1="408" x2="529.7" y2="781" stroke="#b0b6a4" stroke-width="0.8" stroke-dasharray="3 5"/><line x1="507.0" y1="408" x2="551.7" y2="781" stroke="#b0b6a4" stroke-width="0.8" stroke-dasharray="3 5"/><line x1="529.0" y1="408" x2="573.7" y2="781" stroke="#b0b6a4" stroke-width="0.8" stroke-dasharray="3 5"/><line x1="551.0" y1="408" x2="595.7" y2="781" stroke="#b0b6a4" stroke-width="0.8" stroke-dasharray="3 5"/><line x1="573.0" y1="408" x2="617.7" y2="781" stroke="#b0b6a4" stroke-width="0.8" stroke-dasharray="3 5"/><line x1="595.0" y1="408" x2="639.7" y2="781" stroke="#b0b6a4" stroke-width="0.8" stroke-dasharray="3 5"/><line x1="617.0" y1="408" x2="661.7" y2="781" stroke="#b0b6a4" stroke-width="0.8" stroke-dasharray="3 5"/><line x1="639.0" y1="408" x2="683.7" y2="781" stroke="#b0b6a4" stroke-width="0.8" stroke-dasharray="3 5"/><line x1="661.0" y1="408" x2="705.7" y2="781" stroke="#b0b6a4" stroke-width="0.8" stroke-dasharray="3 5"/><line x1="683.0" y1="408" x2="727.7" y2="781" stroke="#b0b6a4" stroke-width="0.8" stroke-dasharray="3 5"/><line x1="705.0" y1="408" x2="749.7" y2="781" stroke="#b0b6a4" stroke-width="0.8" stroke-dasharray="3 5"/><line x1="727.0" y1="408" x2="771.7" y2="781" stroke="#b0b6a4" stroke-width="0.8" stroke-dasharray="3 5"/><line x1="749.0" y1="408" x2="793.7" y2="781" stroke="#b0b6a4" stroke-width="0.8" stroke-dasharray="3 5"/><line x1="771.0" y1="408" x2="815.7" y2="781" stroke="#b0b6a4" stroke-width="0.8" stroke-dasharray="3 5"/><line x1="793.0" y1="408" x2="837.7" y2="781" stroke="#b0b6a4" stroke-width="0.8" stroke-dasharray="3 5"/><line x1="815.0" y1="408" x2="859.7" y2="781" stroke="#b0b6a4" stroke-width="0.8" stroke-dasharray="3 5"/><line x1="837.0" y1="408" x2="881.7" y2="781" stroke="#b0b6a4" stroke-width="0.8" stroke-dasharray="3 5"/><line x1="859.0" y1="408" x2="903.7" y2="781" stroke="#b0b6a4" stroke-width="0.8" stroke-dasharray="3 5"/><line x1="881.0" y1="408" x2="925.7" y2="781" stroke="#b0b6a4" stroke-width="0.8" stroke-dasharray="3 5"/><line x1="903.0" y1="408" x2="947.7" y2="781" stroke="#b0b6a4" stroke-width="0.8" stroke-dasharray="3 5"/><line x1="925.0" y1="408" x2="969.7" y2="781" stroke="#b0b6a4" stroke-width="0.8" stroke-dasharray="3 5"/><line x1="947.0" y1="408" x2="991.7" y2="781" stroke="#b0b6a4" stroke-width="0.8" stroke-dasharray="3 5"/><polygon points="65.5,425 548,622 548,735 440,690 323,645 320,634 168,581 65.5,552" fill="#0f5ef2"/><polygon points="65.5,425 548,622 548,634 65.5,437" fill="#2a78f8" opacity="0.7"/><polygon points="65.5,540 168,575 320,628 323,640 168,584 65.5,552" fill="#2a6ae0"/><polygon points="224,495.5 273,513 323.6,528.7 249.5,508" fill="#dfe6e6"/><polygon points="331,536.5 351,546 409,577 440.5,587.5" fill="#dfe6e6" stroke="#dfe6e6" stroke-width="3"/><polygon points="226,603 304,624 316,634" fill="#dfe6e6" stroke="#dfe6e6" stroke-width="2"/><polygon points="362.6,661 429,682 440.5,690.4" fill="#dfe6e6" stroke="#dfe6e6" stroke-width="2"/><polygon points="65,454 548,649 548,709 65,511" fill="#5a40b0"/><polygon points="65,468 97,484 136,492 175,513 234,529 273,548 331,560 390,583 429,599 487,630 548,673 548,688.5 468,657 390,634 312,610.5 234,579 156,548 65,511" fill="#e29a92"/><line x1="65" y1="511" x2="548" y2="709" stroke="#1a20c8" stroke-width="1.3"/><line x1="65" y1="454" x2="548" y2="649" stroke="#1a20c8" stroke-width="1"/><line x1="65.5" y1="552" x2="168" y2="584" stroke="#7ae0f0" stroke-width="1"/><line x1="323" y1="645" x2="548" y2="737" stroke="#7ae0f0" stroke-width="1"/><line x1="180.2" y1="536.1" x2="169.8" y2="535.0" stroke="#2a2ad0" stroke-width="0.9" stroke-dasharray="2 2"/><line x1="367.8" y1="587.6" x2="328.9" y2="612.6" stroke="#2a2ad0" stroke-width="0.9" stroke-dasharray="2 2"/><line x1="190.5" y1="523.9" x2="230.2" y2="552.6" stroke="#2a2ad0" stroke-width="0.9" stroke-dasharray="2 2"/><line x1="469.8" y1="651.2" x2="481.0" y2="638.5" stroke="#2a2ad0" stroke-width="0.9" stroke-dasharray="2 2"/><line x1="372.3" y1="632.0" x2="374.1" y2="626.0" stroke="#2a2ad0" stroke-width="0.9" stroke-dasharray="2 2"/><line x1="390.0" y1="596.6" x2="410.6" y2="633.0" stroke="#2a2ad0" stroke-width="0.9" stroke-dasharray="2 2"/><line x1="210.8" y1="521.4" x2="240.1" y2="556.8" stroke="#2a2ad0" stroke-width="0.9" stroke-dasharray="2 2"/><line x1="412.9" y1="649.2" x2="430.0" y2="658.5" stroke="#2a2ad0" stroke-width="0.9" stroke-dasharray="2 2"/><line x1="256.2" y1="580.8" x2="251.7" y2="586.1" stroke="#2a2ad0" stroke-width="0.9" stroke-dasharray="2 2"/><line x1="490.4" y1="639.6" x2="461.2" y2="634.0" stroke="#2a2ad0" stroke-width="0.9" stroke-dasharray="2 2"/><line x1="532.3" y1="674.7" x2="542.4" y2="671.7" stroke="#2a2ad0" stroke-width="0.9" stroke-dasharray="2 2"/><line x1="310.5" y1="581.1" x2="298.6" y2="586.8" stroke="#2a2ad0" stroke-width="0.9" stroke-dasharray="2 2"/><line x1="347.8" y1="623.9" x2="362.3" y2="631.1" stroke="#2a2ad0" stroke-width="0.9" stroke-dasharray="2 2"/><line x1="479.5" y1="682.5" x2="493.2" y2="644.2" stroke="#2a2ad0" stroke-width="0.9" stroke-dasharray="2 2"/><line x1="481.5" y1="681.9" x2="513.9" y2="674.2" stroke="#2a2ad0" stroke-width="0.9" stroke-dasharray="2 2"/><line x1="410.5" y1="612.8" x2="437.0" y2="642.9" stroke="#2a2ad0" stroke-width="0.9" stroke-dasharray="2 2"/><line x1="202.9" y1="519.9" x2="231.2" y2="580.6" stroke="#2a2ad0" stroke-width="0.9" stroke-dasharray="2 2"/><line x1="107.8" y1="520.0" x2="100.7" y2="482.6" stroke="#2a2ad0" stroke-width="0.9" stroke-dasharray="2 2"/><line x1="207.2" y1="559.1" x2="237.1" y2="532.9" stroke="#2a2ad0" stroke-width="0.9" stroke-dasharray="2 2"/><line x1="362.4" y1="584.3" x2="379.9" y2="606.7" stroke="#2a2ad0" stroke-width="0.9" stroke-dasharray="2 2"/><line x1="491.4" y1="686.8" x2="491.8" y2="687.9" stroke="#2a2ad0" stroke-width="0.9" stroke-dasharray="2 2"/><line x1="214.9" y1="525.5" x2="222.9" y2="526.4" stroke="#2a2ad0" stroke-width="0.9" stroke-dasharray="2 2"/><line x1="160.5" y1="520.8" x2="169.4" y2="511.1" stroke="#2a2ad0" stroke-width="0.9" stroke-dasharray="2 2"/><line x1="85.5" y1="514.4" x2="70.6" y2="513.1" stroke="#2a2ad0" stroke-width="0.9" stroke-dasharray="2 2"/><line x1="499.0" y1="658.0" x2="495.8" y2="664.2" stroke="#2a2ad0" stroke-width="0.9" stroke-dasharray="2 2"/><line x1="376.6" y1="619.3" x2="381.4" y2="622.6" stroke="#2a2ad0" stroke-width="0.9" stroke-dasharray="2 2"/><line x1="520.3" y1="673.5" x2="514.8" y2="682.6" stroke="#2a2ad0" stroke-width="0.9" stroke-dasharray="2 2"/><line x1="180.0" y1="523.1" x2="218.2" y2="550.4" stroke="#2a2ad0" stroke-width="0.9" stroke-dasharray="2 2"/><line x1="330.4" y1="569.4" x2="323.7" y2="596.8" stroke="#2a2ad0" stroke-width="0.9" stroke-dasharray="2 2"/><line x1="74.7" y1="496.6" x2="85.3" y2="471.5" stroke="#2a2ad0" stroke-width="0.9" stroke-dasharray="2 2"/><line x1="368.6" y1="609.2" x2="383.0" y2="609.1" stroke="#2a2ad0" stroke-width="0.9" stroke-dasharray="2 2"/><line x1="407.2" y1="639.4" x2="368.9" y2="587.8" stroke="#2a2ad0" stroke-width="0.9" stroke-dasharray="2 2"/><line x1="392.2" y1="645.2" x2="372.3" y2="610.2" stroke="#2a2ad0" stroke-width="0.9" stroke-dasharray="2 2"/><line x1="351.9" y1="594.6" x2="341.0" y2="589.7" stroke="#2a2ad0" stroke-width="0.9" stroke-dasharray="2 2"/><line x1="243.7" y1="564.8" x2="227.7" y2="546.7" stroke="#2a2ad0" stroke-width="0.9" stroke-dasharray="2 2"/><line x1="438.8" y1="614.7" x2="444.3" y2="654.5" stroke="#2a2ad0" stroke-width="0.9" stroke-dasharray="2 2"/><line x1="215.0" y1="533.3" x2="239.4" y2="544.1" stroke="#2a2ad0" stroke-width="0.9" stroke-dasharray="2 2"/><line x1="155.7" y1="520.3" x2="171.5" y2="509.1" stroke="#2a2ad0" stroke-width="0.9" stroke-dasharray="2 2"/><line x1="220.8" y1="541.6" x2="247.5" y2="558.1" stroke="#2a2ad0" stroke-width="0.9" stroke-dasharray="2 2"/><line x1="479.1" y1="638.7" x2="466.0" y2="658.9" stroke="#2a2ad0" stroke-width="0.9" stroke-dasharray="2 2"/><line x1="493.3" y1="659.5" x2="471.3" y2="633.0" stroke="#2a2ad0" stroke-width="0.9" stroke-dasharray="2 2"/><line x1="321.3" y1="575.2" x2="345.9" y2="619.6" stroke="#2a2ad0" stroke-width="0.9" stroke-dasharray="2 2"/><line x1="153.9" y1="511.2" x2="178.4" y2="540.5" stroke="#2a2ad0" stroke-width="0.9" stroke-dasharray="2 2"/><line x1="455.2" y1="638.3" x2="425.6" y2="623.3" stroke="#2a2ad0" stroke-width="0.9" stroke-dasharray="2 2"/><line x1="449.2" y1="631.9" x2="436.9" y2="634.6" stroke="#2a2ad0" stroke-width="0.9" stroke-dasharray="2 2"/><line x1="268.2" y1="565.0" x2="301.8" y2="565.4" stroke="#2a2ad0" stroke-width="0.9" stroke-dasharray="2 2"/><line x1="67.3" y1="510.9" x2="97.7" y2="525.7" stroke="#2a2ad0" stroke-width="0.9" stroke-dasharray="2 2"/><line x1="275.2" y1="596.6" x2="309.4" y2="572.0" stroke="#2a2ad0" stroke-width="0.9" stroke-dasharray="2 2"/><line x1="425.8" y1="652.3" x2="438.9" y2="640.8" stroke="#2a2ad0" stroke-width="0.9" stroke-dasharray="2 2"/><line x1="204.9" y1="535.4" x2="183.1" y2="512.0" stroke="#2a2ad0" stroke-width="0.9" stroke-dasharray="2 2"/><line x1="349.9" y1="592.0" x2="374.7" y2="589.4" stroke="#2a2ad0" stroke-width="0.9" stroke-dasharray="2 2"/><line x1="502.3" y1="676.1" x2="536.3" y2="700.7" stroke="#2a2ad0" stroke-width="0.9" stroke-dasharray="2 2"/><line x1="500.4" y1="669.1" x2="461.5" y2="662.1" stroke="#2a2ad0" stroke-width="0.9" stroke-dasharray="2 2"/><line x1="148.2" y1="510.0" x2="161.2" y2="527.3" stroke="#2a2ad0" stroke-width="0.9" stroke-dasharray="2 2"/><line x1="265.3" y1="591.9" x2="274.2" y2="563.9" stroke="#2a2ad0" stroke-width="0.9" stroke-dasharray="2 2"/><line x1="187.2" y1="555.8" x2="185.4" y2="550.8" stroke="#2a2ad0" stroke-width="0.9" stroke-dasharray="2 2"/><line x1="235.3" y1="540.3" x2="238.1" y2="574.2" stroke="#2a2ad0" stroke-width="0.9" stroke-dasharray="2 2"/><line x1="147.9" y1="536.0" x2="181.7" y2="550.5" stroke="#2a2ad0" stroke-width="0.9" stroke-dasharray="2 2"/><line x1="463.6" y1="623.8" x2="473.9" y2="673.3" stroke="#2a2ad0" stroke-width="0.9" stroke-dasharray="2 2"/><line x1="89.2" y1="484.3" x2="70.7" y2="490.3" stroke="#2a2ad0" stroke-width="0.9" stroke-dasharray="2 2"/><line x1="269.7" y1="569.0" x2="291.8" y2="553.1" stroke="#2a2ad0" stroke-width="0.9" stroke-dasharray="2 2"/><line x1="91.5" y1="477.6" x2="61.5" y2="462.2" stroke="#2a2ad0" stroke-width="0.9" stroke-dasharray="2 2"/><line x1="536.8" y1="698.7" x2="503.6" y2="666.5" stroke="#2a2ad0" stroke-width="0.9" stroke-dasharray="2 2"/><line x1="217.9" y1="539.4" x2="206.0" y2="552.1" stroke="#2a2ad0" stroke-width="0.9" stroke-dasharray="2 2"/><line x1="348.9" y1="595.5" x2="324.2" y2="583.7" stroke="#2a2ad0" stroke-width="0.9" stroke-dasharray="2 2"/><line x1="124.9" y1="514.0" x2="142.2" y2="511.8" stroke="#2a2ad0" stroke-width="0.9" stroke-dasharray="2 2"/><line x1="103.7" y1="485.3" x2="93.5" y2="503.7" stroke="#2a2ad0" stroke-width="0.9" stroke-dasharray="2 2"/><line x1="443.8" y1="635.5" x2="467.9" y2="658.2" stroke="#2a2ad0" stroke-width="0.9" stroke-dasharray="2 2"/><line x1="273.9" y1="565.4" x2="273.6" y2="582.8" stroke="#2a2ad0" stroke-width="0.9" stroke-dasharray="2 2"/><line x1="268.5" y1="580.2" x2="265.4" y2="555.2" stroke="#2a2ad0" stroke-width="0.9" stroke-dasharray="2 2"/><rect x="115" y="768" width="200" height="4" fill="#fff"/><rect x="315" y="768" width="198" height="4" fill="#000"/><text x="113" y="779" font-size="5" fill="#555" font-family="Liberation Sans">0</text><text x="306" y="779" font-size="5" fill="#555" font-family="Liberation Sans">0.07</text><text x="505" y="779" font-size="5" fill="#555" font-family="Liberation Sans">0.15 (mm)</text></svg></svg>
</body></html>
